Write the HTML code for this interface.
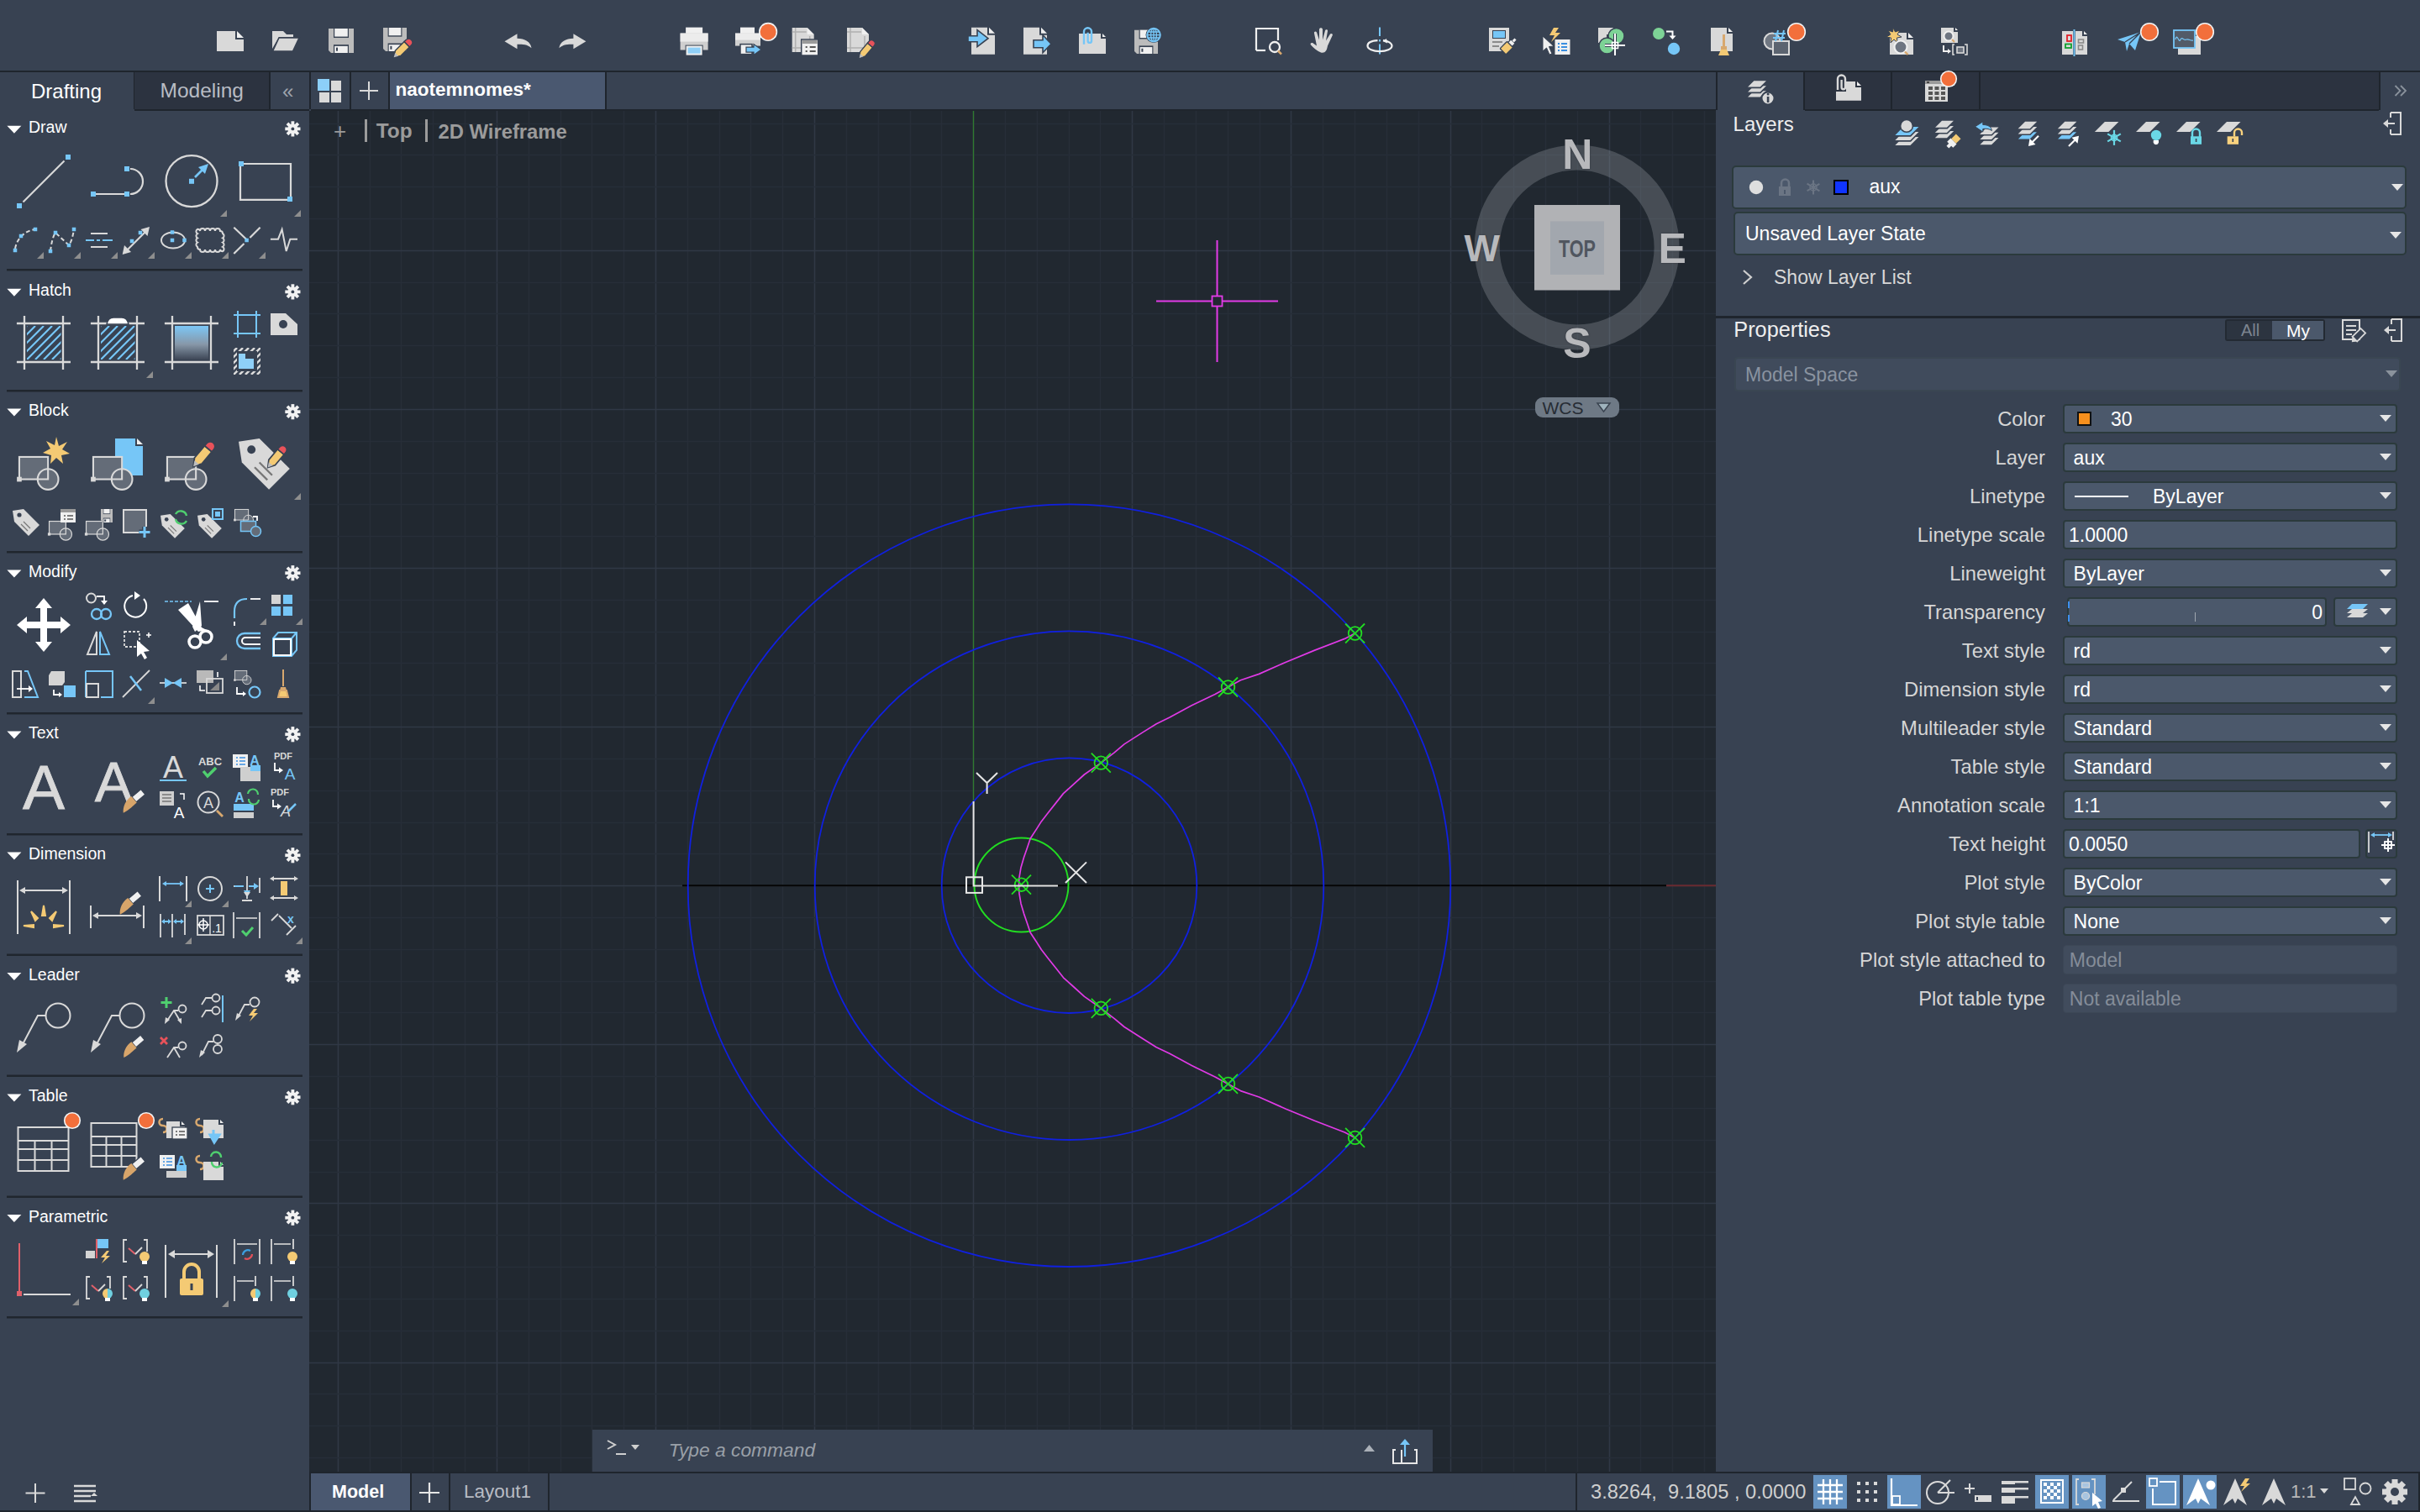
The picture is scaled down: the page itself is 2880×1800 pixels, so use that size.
<!DOCTYPE html><html><head><meta charset="utf-8"><style>
html,body{margin:0;padding:0;}
body{width:2880px;height:1800px;position:relative;overflow:hidden;background:#384252;font-family:"Liberation Sans", sans-serif;}
svg{overflow:visible}
</style></head><body>
<div style="position:absolute;left:0px;top:0px;width:2880px;height:84px;background:#384252;"></div><div style="position:absolute;left:0px;top:84px;width:2880px;height:2px;background:#1f252d;"></div><div style="position:absolute;left:0px;top:86px;width:368px;height:45px;background:#384252;"></div><div style="position:absolute;left:160px;top:86px;width:160px;height:44px;background:#2c3340;"></div><div style="position:absolute;left:370px;top:86px;width:1672px;height:44px;background:#384252;"></div><div style="position:absolute;left:320px;top:86px;width:2px;height:44px;background:#1f252d;"></div><div style="position:absolute;left:368px;top:86px;width:2px;height:44px;background:#1f252d;"></div><div style="position:absolute;left:416px;top:86px;width:2px;height:44px;background:#1f252d;"></div><div style="position:absolute;left:462px;top:86px;width:2px;height:44px;background:#1f252d;"></div><div style="position:absolute;left:159px;top:86px;width:1px;height:44px;background:#1f252d;"></div><div style="position:absolute;left:160px;top:130px;width:208px;height:2px;background:#1f252d;"></div><div style="position:absolute;left:370px;top:130px;width:1672px;height:2px;background:#1f252d;"></div><div style="position:absolute;left:464px;top:86px;width:256px;height:44px;background:#4a5870;"></div><div style="position:absolute;left:720px;top:86px;width:2px;height:44px;background:#1f252d;"></div><div style="position:absolute;left:368px;top:132px;width:1674px;height:1622px;background:#212830;"></div><div style="position:absolute;left:2042px;top:86px;width:838px;height:1668px;background:#384252;"></div><div style="position:absolute;left:0px;top:1754px;width:2880px;height:46px;background:#384252;"></div><div style="position:absolute;left:368px;top:1752px;width:2512px;height:2px;background:#1f252d;"></div><div style="position:absolute;left:0px;top:1798px;width:2880px;height:2px;background:#1f252d;"></div><svg style="position:absolute;left:368px;top:132px;" width="1674" height="1620" viewBox="0 0 1674 1620"><g transform="translate(-368,-132)"><line x1="402.5" y1="132" x2="402.5" y2="1752" stroke="#303845" stroke-width="1.6"/><line x1="440.5" y1="132" x2="440.5" y2="1752" stroke="#272e38" stroke-width="1.6"/><line x1="477.5" y1="132" x2="477.5" y2="1752" stroke="#272e38" stroke-width="1.6"/><line x1="515.5" y1="132" x2="515.5" y2="1752" stroke="#272e38" stroke-width="1.6"/><line x1="553.5" y1="132" x2="553.5" y2="1752" stroke="#272e38" stroke-width="1.6"/><line x1="591.5" y1="132" x2="591.5" y2="1752" stroke="#303845" stroke-width="1.6"/><line x1="629.5" y1="132" x2="629.5" y2="1752" stroke="#272e38" stroke-width="1.6"/><line x1="667.5" y1="132" x2="667.5" y2="1752" stroke="#272e38" stroke-width="1.6"/><line x1="704.5" y1="132" x2="704.5" y2="1752" stroke="#272e38" stroke-width="1.6"/><line x1="742.5" y1="132" x2="742.5" y2="1752" stroke="#272e38" stroke-width="1.6"/><line x1="780.5" y1="132" x2="780.5" y2="1752" stroke="#303845" stroke-width="1.6"/><line x1="818.5" y1="132" x2="818.5" y2="1752" stroke="#272e38" stroke-width="1.6"/><line x1="856.5" y1="132" x2="856.5" y2="1752" stroke="#272e38" stroke-width="1.6"/><line x1="893.5" y1="132" x2="893.5" y2="1752" stroke="#272e38" stroke-width="1.6"/><line x1="931.5" y1="132" x2="931.5" y2="1752" stroke="#272e38" stroke-width="1.6"/><line x1="969.5" y1="132" x2="969.5" y2="1752" stroke="#303845" stroke-width="1.6"/><line x1="1007.5" y1="132" x2="1007.5" y2="1752" stroke="#272e38" stroke-width="1.6"/><line x1="1045.5" y1="132" x2="1045.5" y2="1752" stroke="#272e38" stroke-width="1.6"/><line x1="1083.5" y1="132" x2="1083.5" y2="1752" stroke="#272e38" stroke-width="1.6"/><line x1="1120.5" y1="132" x2="1120.5" y2="1752" stroke="#272e38" stroke-width="1.6"/><line x1="1158.5" y1="132" x2="1158.5" y2="1752" stroke="#303845" stroke-width="1.6"/><line x1="1196.5" y1="132" x2="1196.5" y2="1752" stroke="#272e38" stroke-width="1.6"/><line x1="1234.5" y1="132" x2="1234.5" y2="1752" stroke="#272e38" stroke-width="1.6"/><line x1="1272.5" y1="132" x2="1272.5" y2="1752" stroke="#272e38" stroke-width="1.6"/><line x1="1309.5" y1="132" x2="1309.5" y2="1752" stroke="#272e38" stroke-width="1.6"/><line x1="1347.5" y1="132" x2="1347.5" y2="1752" stroke="#303845" stroke-width="1.6"/><line x1="1385.5" y1="132" x2="1385.5" y2="1752" stroke="#272e38" stroke-width="1.6"/><line x1="1423.5" y1="132" x2="1423.5" y2="1752" stroke="#272e38" stroke-width="1.6"/><line x1="1461.5" y1="132" x2="1461.5" y2="1752" stroke="#272e38" stroke-width="1.6"/><line x1="1499.5" y1="132" x2="1499.5" y2="1752" stroke="#272e38" stroke-width="1.6"/><line x1="1536.5" y1="132" x2="1536.5" y2="1752" stroke="#303845" stroke-width="1.6"/><line x1="1574.5" y1="132" x2="1574.5" y2="1752" stroke="#272e38" stroke-width="1.6"/><line x1="1612.5" y1="132" x2="1612.5" y2="1752" stroke="#272e38" stroke-width="1.6"/><line x1="1650.5" y1="132" x2="1650.5" y2="1752" stroke="#272e38" stroke-width="1.6"/><line x1="1688.5" y1="132" x2="1688.5" y2="1752" stroke="#272e38" stroke-width="1.6"/><line x1="1726.5" y1="132" x2="1726.5" y2="1752" stroke="#303845" stroke-width="1.6"/><line x1="1763.5" y1="132" x2="1763.5" y2="1752" stroke="#272e38" stroke-width="1.6"/><line x1="1801.5" y1="132" x2="1801.5" y2="1752" stroke="#272e38" stroke-width="1.6"/><line x1="1839.5" y1="132" x2="1839.5" y2="1752" stroke="#272e38" stroke-width="1.6"/><line x1="1877.5" y1="132" x2="1877.5" y2="1752" stroke="#272e38" stroke-width="1.6"/><line x1="1915.5" y1="132" x2="1915.5" y2="1752" stroke="#303845" stroke-width="1.6"/><line x1="1952.5" y1="132" x2="1952.5" y2="1752" stroke="#272e38" stroke-width="1.6"/><line x1="1990.5" y1="132" x2="1990.5" y2="1752" stroke="#272e38" stroke-width="1.6"/><line x1="2028.5" y1="132" x2="2028.5" y2="1752" stroke="#272e38" stroke-width="1.6"/><line x1="368" y1="147.5" x2="2042" y2="147.5" stroke="#272e38" stroke-width="1.6"/><line x1="368" y1="184.5" x2="2042" y2="184.5" stroke="#272e38" stroke-width="1.6"/><line x1="368" y1="222.5" x2="2042" y2="222.5" stroke="#272e38" stroke-width="1.6"/><line x1="368" y1="260.5" x2="2042" y2="260.5" stroke="#272e38" stroke-width="1.6"/><line x1="368" y1="298.5" x2="2042" y2="298.5" stroke="#303845" stroke-width="1.6"/><line x1="368" y1="336.5" x2="2042" y2="336.5" stroke="#272e38" stroke-width="1.6"/><line x1="368" y1="373.5" x2="2042" y2="373.5" stroke="#272e38" stroke-width="1.6"/><line x1="368" y1="411.5" x2="2042" y2="411.5" stroke="#272e38" stroke-width="1.6"/><line x1="368" y1="449.5" x2="2042" y2="449.5" stroke="#272e38" stroke-width="1.6"/><line x1="368" y1="487.5" x2="2042" y2="487.5" stroke="#303845" stroke-width="1.6"/><line x1="368" y1="525.5" x2="2042" y2="525.5" stroke="#272e38" stroke-width="1.6"/><line x1="368" y1="563.5" x2="2042" y2="563.5" stroke="#272e38" stroke-width="1.6"/><line x1="368" y1="600.5" x2="2042" y2="600.5" stroke="#272e38" stroke-width="1.6"/><line x1="368" y1="638.5" x2="2042" y2="638.5" stroke="#272e38" stroke-width="1.6"/><line x1="368" y1="676.5" x2="2042" y2="676.5" stroke="#303845" stroke-width="1.6"/><line x1="368" y1="714.5" x2="2042" y2="714.5" stroke="#272e38" stroke-width="1.6"/><line x1="368" y1="752.5" x2="2042" y2="752.5" stroke="#272e38" stroke-width="1.6"/><line x1="368" y1="789.5" x2="2042" y2="789.5" stroke="#272e38" stroke-width="1.6"/><line x1="368" y1="827.5" x2="2042" y2="827.5" stroke="#272e38" stroke-width="1.6"/><line x1="368" y1="865.5" x2="2042" y2="865.5" stroke="#303845" stroke-width="1.6"/><line x1="368" y1="903.5" x2="2042" y2="903.5" stroke="#272e38" stroke-width="1.6"/><line x1="368" y1="941.5" x2="2042" y2="941.5" stroke="#272e38" stroke-width="1.6"/><line x1="368" y1="979.5" x2="2042" y2="979.5" stroke="#272e38" stroke-width="1.6"/><line x1="368" y1="1016.5" x2="2042" y2="1016.5" stroke="#272e38" stroke-width="1.6"/><line x1="368" y1="1054.5" x2="2042" y2="1054.5" stroke="#303845" stroke-width="1.6"/><line x1="368" y1="1092.5" x2="2042" y2="1092.5" stroke="#272e38" stroke-width="1.6"/><line x1="368" y1="1130.5" x2="2042" y2="1130.5" stroke="#272e38" stroke-width="1.6"/><line x1="368" y1="1168.5" x2="2042" y2="1168.5" stroke="#272e38" stroke-width="1.6"/><line x1="368" y1="1205.5" x2="2042" y2="1205.5" stroke="#272e38" stroke-width="1.6"/><line x1="368" y1="1243.5" x2="2042" y2="1243.5" stroke="#303845" stroke-width="1.6"/><line x1="368" y1="1281.5" x2="2042" y2="1281.5" stroke="#272e38" stroke-width="1.6"/><line x1="368" y1="1319.5" x2="2042" y2="1319.5" stroke="#272e38" stroke-width="1.6"/><line x1="368" y1="1357.5" x2="2042" y2="1357.5" stroke="#272e38" stroke-width="1.6"/><line x1="368" y1="1395.5" x2="2042" y2="1395.5" stroke="#272e38" stroke-width="1.6"/><line x1="368" y1="1432.5" x2="2042" y2="1432.5" stroke="#303845" stroke-width="1.6"/><line x1="368" y1="1470.5" x2="2042" y2="1470.5" stroke="#272e38" stroke-width="1.6"/><line x1="368" y1="1508.5" x2="2042" y2="1508.5" stroke="#272e38" stroke-width="1.6"/><line x1="368" y1="1546.5" x2="2042" y2="1546.5" stroke="#272e38" stroke-width="1.6"/><line x1="368" y1="1584.5" x2="2042" y2="1584.5" stroke="#272e38" stroke-width="1.6"/><line x1="368" y1="1622.5" x2="2042" y2="1622.5" stroke="#303845" stroke-width="1.6"/><line x1="368" y1="1659.5" x2="2042" y2="1659.5" stroke="#272e38" stroke-width="1.6"/><line x1="368" y1="1697.5" x2="2042" y2="1697.5" stroke="#272e38" stroke-width="1.6"/><line x1="368" y1="1735.5" x2="2042" y2="1735.5" stroke="#272e38" stroke-width="1.6"/><line x1="812" y1="1054.2" x2="1983" y2="1054.2" stroke="#050505" stroke-width="2"/><line x1="1983" y1="1054.2" x2="2042" y2="1054.2" stroke="#6a2a30" stroke-width="2"/><line x1="1158.5" y1="132" x2="1158.5" y2="954" stroke="#2f7a2f" stroke-width="1.3"/><circle cx="1272.5" cy="1054.2" r="151.8" fill="none" stroke="#1020e0" stroke-width="1.8"/><circle cx="1272.5" cy="1054.2" r="302.8" fill="none" stroke="#1020e0" stroke-width="1.8"/><circle cx="1272.5" cy="1054.2" r="453.8" fill="none" stroke="#1020e0" stroke-width="1.8"/><circle cx="1215.5" cy="1053.5" r="56" fill="none" stroke="#22dd22" stroke-width="2"/><path d="M1612.6,754.0 L1600.3,760.4 L1564.6,774.1 L1530.4,788.2 L1498.4,802.4 L1476.4,809.8 L1461.5,818.0 L1446.0,826.4 L1418.3,839.8 L1392.0,854.1 L1376.2,861.7 L1360.3,871.6 L1338.0,885.9 L1326.2,895.8 L1310.3,908.1 L1290.5,922.0 L1277.4,933.9 L1265.5,944.6 L1257.0,955.4 L1247.6,967.2 L1239.3,977.9 L1233.3,987.4 L1226.2,998.2 L1222.6,1008.9 L1218.5,1020.8 L1215.0,1032.7 L1213.0,1044.6 L1212.5,1054.2 L1213.0,1063.8 L1215.0,1075.7 L1218.5,1087.6 L1222.6,1099.5 L1226.2,1110.2 L1233.3,1121.0 L1239.3,1130.5 L1247.6,1141.2 L1257.0,1153.0 L1265.5,1163.8 L1277.4,1174.5 L1290.5,1186.4 L1310.3,1200.3 L1326.2,1212.6 L1338.0,1222.5 L1360.3,1236.8 L1376.2,1246.7 L1392.0,1254.3 L1418.3,1268.6 L1446.0,1282.0 L1461.5,1290.4 L1476.4,1298.6 L1498.4,1306.0 L1530.4,1320.2 L1564.6,1334.3 L1600.3,1348.0 L1612.6,1354.4" fill="none" stroke="#e03ae6" stroke-width="1.7" stroke-linejoin="round"/><circle cx="1215.5" cy="1053.2" r="7.8" fill="none" stroke="#22dd22" stroke-width="1.8"/><path d="M1204.0,1041.7L1227.0,1064.7M1204.0,1064.7L1227.0,1041.7" stroke="#22dd22" stroke-width="1.8"/><circle cx="1310.3" cy="908.1" r="7.8" fill="none" stroke="#22dd22" stroke-width="1.8"/><path d="M1298.8,896.6L1321.8,919.6M1298.8,919.6L1321.8,896.6" stroke="#22dd22" stroke-width="1.8"/><circle cx="1461.5" cy="818" r="7.8" fill="none" stroke="#22dd22" stroke-width="1.8"/><path d="M1450.0,806.5L1473.0,829.5M1450.0,829.5L1473.0,806.5" stroke="#22dd22" stroke-width="1.8"/><circle cx="1612.6" cy="754" r="7.8" fill="none" stroke="#22dd22" stroke-width="1.8"/><path d="M1601.1,742.5L1624.1,765.5M1601.1,765.5L1624.1,742.5" stroke="#22dd22" stroke-width="1.8"/><circle cx="1310.3" cy="1200.3" r="7.8" fill="none" stroke="#22dd22" stroke-width="1.8"/><path d="M1298.8,1188.8L1321.8,1211.8M1298.8,1211.8L1321.8,1188.8" stroke="#22dd22" stroke-width="1.8"/><circle cx="1461.5" cy="1290.4" r="7.8" fill="none" stroke="#22dd22" stroke-width="1.8"/><path d="M1450.0,1278.9L1473.0,1301.9M1450.0,1301.9L1473.0,1278.9" stroke="#22dd22" stroke-width="1.8"/><circle cx="1612.6" cy="1354.4" r="7.8" fill="none" stroke="#22dd22" stroke-width="1.8"/><path d="M1601.1,1342.9L1624.1,1365.9M1601.1,1365.9L1624.1,1342.9" stroke="#22dd22" stroke-width="1.8"/><path d="M1158.6,954 L1158.6,1054.5 L1259,1054.5" fill="none" stroke="#e6e6e6" stroke-width="2"/><rect x="1150" y="1044.3" width="19" height="18.6" fill="none" stroke="#e6e6e6" stroke-width="2"/><path d="M1162,920 L1174.6,932 L1187,920 M1174.6,932 L1174.6,945" fill="none" stroke="#e6e6e6" stroke-width="2"/><path d="M1268,1026.4 L1293,1051 M1268,1051 L1293,1026.4" fill="none" stroke="#e6e6e6" stroke-width="2"/><path d="M1376,358.5 L1442,358.5 M1455,358.5 L1521,358.5 M1448.5,286 L1448.5,352 M1448.5,365 L1448.5,431" stroke="#e33be8" stroke-width="2"/><rect x="1442.5" y="352.5" width="12" height="12" fill="none" stroke="#e33be8" stroke-width="1.8"/><circle cx="1876.6" cy="294.5" r="107" fill="none" stroke="#a0a5ad" stroke-opacity="0.3" stroke-width="30"/><rect x="1826" y="244" width="102" height="101.5" fill="#b1b2b5"/><rect x="1845" y="263.4" width="64" height="63.5" fill="#a2a7ae"/></g></svg><div style="position:absolute;left:1377.3px;width:1000px;text-align:center;top:280.6px;font-size:30px;line-height:30px;color:#50565f;font-weight:bold;white-space:nowrap;transform:scaleX(0.72);">TOP</div><div style="position:absolute;left:1377.4px;width:1000px;text-align:center;top:159.2px;font-size:50px;line-height:50px;color:#b8b9bc;font-weight:bold;white-space:nowrap;text-shadow:0 0 2px #2a2f38;">N</div><div style="position:absolute;left:1263.8px;width:1000px;text-align:center;top:272.9px;font-size:45px;line-height:45px;color:#b8b9bc;font-weight:bold;white-space:nowrap;text-shadow:0 0 2px #2a2f38;">W</div><div style="position:absolute;left:1490.2px;width:1000px;text-align:center;top:270.7px;font-size:50px;line-height:50px;color:#b8b9bc;font-weight:bold;white-space:nowrap;text-shadow:0 0 2px #2a2f38;">E</div><div style="position:absolute;left:1377px;width:1000px;text-align:center;top:384.4px;font-size:50px;line-height:50px;color:#b8b9bc;font-weight:bold;white-space:nowrap;text-shadow:0 0 2px #2a2f38;">S</div><div style="position:absolute;left:1827px;top:473px;width:100px;height:24px;background:#6e7985;border-radius:9px;"></div><div style="position:absolute;left:1360px;width:1000px;text-align:center;top:474.7px;font-size:21px;line-height:21px;color:#262c34;font-weight:normal;white-space:nowrap;">WCS</div><svg style="position:absolute;left:1900px;top:479px;" width="17" height="12" viewBox="0 0 17 12"><path d="M1,1 L16,1 L8.5,11 Z" fill="#9fb3bd" stroke="#3a4450" stroke-width="1.5"/></svg><div style="position:absolute;left:397px;top:143.0px;font-size:26px;line-height:26px;color:#9b9b9b;font-weight:normal;white-space:nowrap;">+</div><div style="position:absolute;left:434px;top:142px;width:3px;height:27px;background:#9b9b9b;"></div><div style="position:absolute;left:447.7px;top:144.3px;font-size:24.4px;line-height:24.4px;color:#9b9b9b;font-weight:bold;white-space:nowrap;">Top</div><div style="position:absolute;left:506px;top:142px;width:3px;height:27px;background:#9b9b9b;"></div><div style="position:absolute;left:521.5px;top:144.9px;font-size:23.8px;line-height:23.8px;color:#9b9b9b;font-weight:bold;white-space:nowrap;">2D Wireframe</div><div style="position:absolute;left:34px;top:142.2px;font-size:19.5px;line-height:19.5px;color:#ffffff;font-weight:normal;white-space:nowrap;">Draw</div><div style="position:absolute;left:34px;top:336.2px;font-size:19.5px;line-height:19.5px;color:#ffffff;font-weight:normal;white-space:nowrap;">Hatch</div><div style="position:absolute;left:34px;top:479.0px;font-size:19.5px;line-height:19.5px;color:#ffffff;font-weight:normal;white-space:nowrap;">Block</div><div style="position:absolute;left:34px;top:671.0px;font-size:19.5px;line-height:19.5px;color:#ffffff;font-weight:normal;white-space:nowrap;">Modify</div><div style="position:absolute;left:34px;top:863.0px;font-size:19.5px;line-height:19.5px;color:#ffffff;font-weight:normal;white-space:nowrap;">Text</div><div style="position:absolute;left:34px;top:1007.0px;font-size:19.5px;line-height:19.5px;color:#ffffff;font-weight:normal;white-space:nowrap;">Dimension</div><div style="position:absolute;left:34px;top:1150.5px;font-size:19.5px;line-height:19.5px;color:#ffffff;font-weight:normal;white-space:nowrap;">Leader</div><div style="position:absolute;left:34px;top:1295.0px;font-size:19.5px;line-height:19.5px;color:#ffffff;font-weight:normal;white-space:nowrap;">Table</div><div style="position:absolute;left:34px;top:1438.5px;font-size:19.5px;line-height:19.5px;color:#ffffff;font-weight:normal;white-space:nowrap;">Parametric</div><div style="position:absolute;left:37px;top:96.7px;font-size:24px;line-height:24px;color:#ffffff;font-weight:normal;white-space:nowrap;">Drafting</div><div style="position:absolute;left:190.5px;top:96.3px;font-size:24.5px;line-height:24.5px;color:#b8bcc4;font-weight:normal;white-space:nowrap;">Modeling</div><div style="position:absolute;left:336px;top:96.7px;font-size:24px;line-height:24px;color:#9ea4ad;font-weight:normal;white-space:nowrap;">&laquo;</div><svg style="position:absolute;left:375px;top:91px;" width="34" height="34" viewBox="0 0 34 34"><rect x="3" y="3" width="14" height="14" fill="#8ccff8"/><rect x="19" y="5" width="12" height="12" fill="#d9d9d9"/><rect x="5" y="19" width="12" height="12" fill="#d9d9d9"/><rect x="19" y="19" width="12" height="12" fill="#d9d9d9"/></svg><svg style="position:absolute;left:428px;top:96px;" width="24" height="24" viewBox="0 0 24 24"><path d="M11,1V23M0,12H22" stroke="#d9d9d9" stroke-width="2"/></svg><div style="position:absolute;left:470.5px;top:96.2px;font-size:22.5px;line-height:22.5px;color:#ffffff;font-weight:bold;white-space:nowrap;">naotemnomes*</div><div style="position:absolute;left:2042px;top:86px;width:2px;height:45px;background:#1f252d;"></div><div style="position:absolute;left:2146px;top:86px;width:2px;height:45px;background:#1f252d;"></div><div style="position:absolute;left:2148px;top:86px;width:102px;height:45px;background:#2c3340;"></div><div style="position:absolute;left:2250px;top:86px;width:2px;height:45px;background:#1f252d;"></div><div style="position:absolute;left:2252px;top:86px;width:103px;height:45px;background:#2c3340;"></div><div style="position:absolute;left:2355px;top:86px;width:2px;height:45px;background:#1f252d;"></div><div style="position:absolute;left:2357px;top:86px;width:474px;height:45px;background:#2c3340;"></div><div style="position:absolute;left:2831px;top:86px;width:2px;height:45px;background:#1f252d;"></div><div style="position:absolute;left:2148px;top:130px;width:683px;height:2px;background:#1f252d;"></div><div style="position:absolute;left:2062.6px;top:135.7px;font-size:24px;line-height:24px;color:#eeeeee;font-weight:normal;white-space:nowrap;">Layers</div><div style="position:absolute;left:2061px;top:196.5px;width:2803px;height:0px;background:transparent;"></div><div style="position:absolute;left:2061px;top:196.5px;width:803px;height:52px;background:#4b586b;border:2px solid #2b3a3c;border-radius:5px;box-sizing:border-box;"></div><div style="position:absolute;left:2224.5px;top:211.3px;font-size:23px;line-height:23px;color:#ffffff;font-weight:normal;white-space:nowrap;transform:scaleY(1.08);transform-origin:0 90%;">aux</div><div style="position:absolute;left:2062.5px;top:252px;width:801.5px;height:52px;background:#4b586b;border:2px solid #2b3a3c;border-radius:5px;box-sizing:border-box;"></div><div style="position:absolute;left:2077px;top:267.0px;font-size:23px;line-height:23px;color:#ffffff;font-weight:normal;white-space:nowrap;">Unsaved Layer State</div><div style="position:absolute;left:2111px;top:318.5px;font-size:23px;line-height:23px;color:#d8d8d8;font-weight:normal;white-space:nowrap;">Show Layer List</div><div style="position:absolute;left:2042px;top:376px;width:838px;height:2.5px;background:#1f252d;"></div><div style="position:absolute;left:2063.3px;top:380.4px;font-size:25.3px;line-height:25.3px;color:#eeeeee;font-weight:normal;white-space:nowrap;">Properties</div><div style="position:absolute;left:2648px;top:380px;width:119px;height:26px;background:#2c3440;border:2px solid #232a33;border-radius:3px;box-sizing:border-box;"></div><div style="position:absolute;left:2704px;top:382px;width:61px;height:22px;background:#4b586b;"></div><div style="position:absolute;left:2178px;width:1000px;text-align:center;top:383.1px;font-size:20px;line-height:20px;color:#7d8590;font-weight:normal;white-space:nowrap;">All</div><div style="position:absolute;left:2235px;width:1000px;text-align:center;top:383.2px;font-size:21px;line-height:21px;color:#ffffff;font-weight:normal;white-space:nowrap;">My</div><div style="position:absolute;left:2064px;top:425px;width:793px;height:41px;background:#404b5c;border:2px solid #3a4652;border-radius:4px;box-sizing:border-box;"></div><div style="position:absolute;left:2077px;top:434.5px;font-size:23px;line-height:23px;color:#8a93a0;font-weight:normal;white-space:nowrap;">Model Space</div><div style="position:absolute;right:446px;top:486.9px;font-size:23.8px;line-height:23.8px;color:#d6d6d6;font-weight:normal;white-space:nowrap;">Color</div><div style="position:absolute;left:2455px;top:481.0px;width:398px;height:35px;background:#4b586b;border:2px solid #2b3a3c;border-radius:4px;box-sizing:border-box;"></div><div style="position:absolute;left:2472px;top:490.0px;width:17px;height:17px;background:#f7901e;border:2px solid #111;box-sizing:border-box;"></div><div style="position:absolute;left:2512px;top:487.5px;font-size:23px;line-height:23px;color:#ffffff;font-weight:normal;white-space:nowrap;">30</div><div style="position:absolute;right:446px;top:532.9px;font-size:23.8px;line-height:23.8px;color:#d6d6d6;font-weight:normal;white-space:nowrap;">Layer</div><div style="position:absolute;left:2455px;top:527.0px;width:398px;height:35px;background:#4b586b;border:2px solid #2b3a3c;border-radius:4px;box-sizing:border-box;"></div><div style="position:absolute;left:2467.6px;top:533.5px;font-size:23px;line-height:23px;color:#ffffff;font-weight:normal;white-space:nowrap;">aux</div><div style="position:absolute;right:446px;top:578.9px;font-size:23.8px;line-height:23.8px;color:#d6d6d6;font-weight:normal;white-space:nowrap;">Linetype</div><div style="position:absolute;left:2455px;top:573.0px;width:398px;height:35px;background:#4b586b;border:2px solid #2b3a3c;border-radius:4px;box-sizing:border-box;"></div><div style="position:absolute;left:2469px;top:590.0px;width:64px;height:2px;background:#ffffff;"></div><div style="position:absolute;left:2562px;top:579.5px;font-size:23px;line-height:23px;color:#ffffff;font-weight:normal;white-space:nowrap;">ByLayer</div><div style="position:absolute;right:446px;top:624.9px;font-size:23.8px;line-height:23.8px;color:#d6d6d6;font-weight:normal;white-space:nowrap;">Linetype scale</div><div style="position:absolute;left:2455px;top:619.0px;width:398px;height:35px;background:#4b586b;border:2px solid #2b3a3c;border-radius:4px;box-sizing:border-box;"></div><div style="position:absolute;left:2462px;top:625.5px;font-size:23px;line-height:23px;color:#ffffff;font-weight:normal;white-space:nowrap;">1.0000</div><div style="position:absolute;right:446px;top:670.9px;font-size:23.8px;line-height:23.8px;color:#d6d6d6;font-weight:normal;white-space:nowrap;">Lineweight</div><div style="position:absolute;left:2455px;top:665.0px;width:398px;height:35px;background:#4b586b;border:2px solid #2b3a3c;border-radius:4px;box-sizing:border-box;"></div><div style="position:absolute;left:2467.6px;top:671.5px;font-size:23px;line-height:23px;color:#ffffff;font-weight:normal;white-space:nowrap;">ByLayer</div><div style="position:absolute;right:446px;top:716.9px;font-size:23.8px;line-height:23.8px;color:#d6d6d6;font-weight:normal;white-space:nowrap;">Transparency</div><div style="position:absolute;left:2460px;top:711.0px;width:309px;height:35px;background:#4b586b;border:2px solid #2b3a3c;border-radius:4px;box-sizing:border-box;"></div><div style="position:absolute;right:116px;top:717.5px;font-size:23px;line-height:23px;color:#ffffff;font-weight:normal;white-space:nowrap;">0</div><div style="position:absolute;left:2776.6px;top:711.0px;width:76.40000000000009px;height:35px;background:#4b586b;border:2px solid #2b3a3c;border-radius:4px;box-sizing:border-box;"></div><div style="position:absolute;right:446px;top:762.9px;font-size:23.8px;line-height:23.8px;color:#d6d6d6;font-weight:normal;white-space:nowrap;">Text style</div><div style="position:absolute;left:2455px;top:757.0px;width:398px;height:35px;background:#4b586b;border:2px solid #2b3a3c;border-radius:4px;box-sizing:border-box;"></div><div style="position:absolute;left:2467.6px;top:763.5px;font-size:23px;line-height:23px;color:#ffffff;font-weight:normal;white-space:nowrap;">rd</div><div style="position:absolute;right:446px;top:808.9px;font-size:23.8px;line-height:23.8px;color:#d6d6d6;font-weight:normal;white-space:nowrap;">Dimension style</div><div style="position:absolute;left:2455px;top:803.0px;width:398px;height:35px;background:#4b586b;border:2px solid #2b3a3c;border-radius:4px;box-sizing:border-box;"></div><div style="position:absolute;left:2467.6px;top:809.5px;font-size:23px;line-height:23px;color:#ffffff;font-weight:normal;white-space:nowrap;">rd</div><div style="position:absolute;right:446px;top:854.9px;font-size:23.8px;line-height:23.8px;color:#d6d6d6;font-weight:normal;white-space:nowrap;">Multileader style</div><div style="position:absolute;left:2455px;top:849.0px;width:398px;height:35px;background:#4b586b;border:2px solid #2b3a3c;border-radius:4px;box-sizing:border-box;"></div><div style="position:absolute;left:2467.6px;top:855.5px;font-size:23px;line-height:23px;color:#ffffff;font-weight:normal;white-space:nowrap;">Standard</div><div style="position:absolute;right:446px;top:900.9px;font-size:23.8px;line-height:23.8px;color:#d6d6d6;font-weight:normal;white-space:nowrap;">Table style</div><div style="position:absolute;left:2455px;top:895.0px;width:398px;height:35px;background:#4b586b;border:2px solid #2b3a3c;border-radius:4px;box-sizing:border-box;"></div><div style="position:absolute;left:2467.6px;top:901.5px;font-size:23px;line-height:23px;color:#ffffff;font-weight:normal;white-space:nowrap;">Standard</div><div style="position:absolute;right:446px;top:946.9px;font-size:23.8px;line-height:23.8px;color:#d6d6d6;font-weight:normal;white-space:nowrap;">Annotation scale</div><div style="position:absolute;left:2455px;top:941.0px;width:398px;height:35px;background:#4b586b;border:2px solid #2b3a3c;border-radius:4px;box-sizing:border-box;"></div><div style="position:absolute;left:2467.6px;top:947.5px;font-size:23px;line-height:23px;color:#ffffff;font-weight:normal;white-space:nowrap;">1:1</div><div style="position:absolute;right:446px;top:992.9px;font-size:23.8px;line-height:23.8px;color:#d6d6d6;font-weight:normal;white-space:nowrap;">Text height</div><div style="position:absolute;left:2455px;top:987.0px;width:354px;height:35px;background:#4b586b;border:2px solid #2b3a3c;border-radius:4px;box-sizing:border-box;"></div><div style="position:absolute;left:2815px;top:987.0px;width:38px;height:35px;background:#394354;border:2px solid #2b3a3c;border-radius:4px;box-sizing:border-box;"></div><div style="position:absolute;left:2462px;top:993.5px;font-size:23px;line-height:23px;color:#ffffff;font-weight:normal;white-space:nowrap;">0.0050</div><div style="position:absolute;right:446px;top:1038.9px;font-size:23.8px;line-height:23.8px;color:#d6d6d6;font-weight:normal;white-space:nowrap;">Plot style</div><div style="position:absolute;left:2455px;top:1033.0px;width:398px;height:35px;background:#4b586b;border:2px solid #2b3a3c;border-radius:4px;box-sizing:border-box;"></div><div style="position:absolute;left:2467.6px;top:1039.5px;font-size:23px;line-height:23px;color:#ffffff;font-weight:normal;white-space:nowrap;">ByColor</div><div style="position:absolute;right:446px;top:1084.9px;font-size:23.8px;line-height:23.8px;color:#d6d6d6;font-weight:normal;white-space:nowrap;">Plot style table</div><div style="position:absolute;left:2455px;top:1079.0px;width:398px;height:35px;background:#4b586b;border:2px solid #2b3a3c;border-radius:4px;box-sizing:border-box;"></div><div style="position:absolute;left:2467.6px;top:1085.5px;font-size:23px;line-height:23px;color:#ffffff;font-weight:normal;white-space:nowrap;">None</div><div style="position:absolute;right:446px;top:1130.9px;font-size:23.8px;line-height:23.8px;color:#d6d6d6;font-weight:normal;white-space:nowrap;">Plot style attached to</div><div style="position:absolute;left:2455px;top:1125.0px;width:398px;height:35px;background:#414c5d;border:1.5px solid #3c4756;border-radius:4px;box-sizing:border-box;"></div><div style="position:absolute;left:2462.8px;top:1131.5px;font-size:23px;line-height:23px;color:#858d99;font-weight:normal;white-space:nowrap;">Model</div><div style="position:absolute;right:446px;top:1176.9px;font-size:23.8px;line-height:23.8px;color:#d6d6d6;font-weight:normal;white-space:nowrap;">Plot table type</div><div style="position:absolute;left:2455px;top:1171.0px;width:398px;height:35px;background:#414c5d;border:1.5px solid #3c4756;border-radius:4px;box-sizing:border-box;"></div><div style="position:absolute;left:2462.8px;top:1177.5px;font-size:23px;line-height:23px;color:#858d99;font-weight:normal;white-space:nowrap;">Not available</div><div style="position:absolute;left:370px;top:1754px;width:118px;height:44px;background:#4a5870;"></div><div style="position:absolute;left:488px;top:1754px;width:2px;height:44px;background:#1f252d;"></div><div style="position:absolute;left:534px;top:1754px;width:2px;height:44px;background:#1f252d;"></div><div style="position:absolute;left:652px;top:1754px;width:2px;height:44px;background:#1f252d;"></div><div style="position:absolute;left:368px;top:1754px;width:2px;height:44px;background:#1f252d;"></div><svg style="position:absolute;left:496px;top:1762px;" width="30" height="30" viewBox="0 0 30 30"><path d="M15,3V27M3,15H27" stroke="#e6e6e6" stroke-width="2.2"/></svg><div style="position:absolute;left:395px;top:1765.8px;font-size:21.5px;line-height:21.5px;color:#ffffff;font-weight:bold;white-space:nowrap;">Model</div><div style="position:absolute;left:552px;top:1765.0px;font-size:22.5px;line-height:22.5px;color:#b8bcc4;font-weight:normal;white-space:nowrap;">Layout1</div><div style="position:absolute;left:705px;top:1702px;width:1000px;height:50px;background:#384252;"></div><svg style="position:absolute;left:720px;top:1710px;" width="50" height="30" viewBox="0 0 50 30"><path d="M3,5 L12,10 L3,15" fill="none" stroke="#cfcfcf" stroke-width="2"/><path d="M13,21H25" stroke="#cfcfcf" stroke-width="2"/><path d="M31,10H41L36,16Z" fill="#cfcfcf"/></svg><div style="position:absolute;left:795.7px;top:1714.7px;font-size:22.8px;line-height:22.8px;color:#9aa0a8;font-weight:normal;white-space:nowrap;font-style:italic;">Type a command</div><svg style="position:absolute;left:1622px;top:1718px;" width="16" height="12" viewBox="0 0 16 12"><path d="M1,10 L7.5,2 L14,10Z" fill="#aab0b8"/></svg><svg style="position:absolute;left:1656px;top:1712px;" width="34" height="32" viewBox="0 0 34 32"><path d="M5,14 H2 V30 H30 V14 H27" fill="none" stroke="#e6e6e6" stroke-width="2"/><path d="M16,2V22" stroke="#76c6f7" stroke-width="2.2"/><path d="M10,8 L16,1 L22,8Z" fill="#76c6f7"/><path d="M12,14V30" stroke="#e6e6e6" stroke-width="2"/></svg><div style="position:absolute;left:1875px;top:1754px;width:2px;height:44px;background:#1f252d;"></div><div style="position:absolute;left:1893px;top:1765.0px;font-size:23.65px;line-height:23.65px;color:#cfcfcf;font-weight:normal;white-space:nowrap;">3.8264,&nbsp; 9.1805 , 0.0000</div><div style="position:absolute;left:2726px;top:1765.4px;font-size:22px;line-height:22px;color:#b8b8b8;font-weight:normal;white-space:nowrap;">1:1</div><div style="position:absolute;left:2878px;top:1754px;width:2px;height:44px;background:#1f252d;"></div><!--CONTENT--><svg style="position:absolute;left:0;top:0" width="2880" height="1800"><g transform="translate(258,37)"><path d="M0,0H22V10H32V24H0Z" fill="#d9d9d9"/><path d="M24,0L32,8H24Z" fill="#f0f0f0"/></g><g transform="translate(324,37)"><path d="M0,0H13L17,4H25V7H8L0,21Z" fill="#d9d9d9"/><path d="M8,8H32L24.5,24H0.5Z" fill="#d9d9d9" stroke="#384252" stroke-width="1.6"/></g><g transform="translate(391,34)"><path d="M0,0H30V29H3L0,26Z" fill="#bcbcbc"/><rect x="6.0" y="0" width="18.0" height="11.02" fill="#384252"/><rect x="7.199999999999999" y="0" width="15.600000000000001" height="9.57" fill="#f0f0f0"/><rect x="6.0" y="19.14" width="18.0" height="9.860000000000001" fill="#384252"/><rect x="7.199999999999999" y="20.88" width="15.600000000000001" height="8.120000000000001" fill="#f0f0f0"/><rect x="9.0" y="22.62" width="2" height="4.0600000000000005" fill="#384252"/></g><g transform="translate(456,33)"><path d="M0,0H28V28H3L0,25Z" fill="#bcbcbc"/><rect x="5.6000000000000005" y="0" width="16.8" height="10.64" fill="#384252"/><rect x="6.72" y="0" width="14.56" height="9.24" fill="#f0f0f0"/><rect x="5.6000000000000005" y="18.48" width="16.8" height="9.520000000000001" fill="#384252"/><rect x="6.72" y="20.16" width="14.56" height="7.840000000000001" fill="#f0f0f0"/><rect x="8.4" y="21.84" width="2" height="3.9200000000000004" fill="#384252"/><g transform="translate(24,24) rotate(-45) scale(1.0)"><path d="M-9,-4.5 H6 V4.5 H-9 L-16,0 Z" fill="#f4ca74" stroke="#384252" stroke-width="1.5"/><path d="M-16,0 L-11,-2.8 V2.8Z" fill="#bdbdbd"/><path d="M6,-4.5 H9 A4.5,4.5 0 0 1 9,4.5 H6Z" fill="#e8525a" stroke="#384252" stroke-width="1.5"/></g></g><g transform="translate(600.5,40.2)"><path d="M0,9 L15,0 V5.5 C24,5.5 31,9.5 32,17 C27,12.5 22,12.5 15,12.5 V18 Z" fill="#d9d9d9"/></g><g transform="translate(697.4,40.2)"><g transform="scale(-1,1)"><path d="M0,9 L15,0 V5.5 C24,5.5 31,9.5 32,17 C27,12.5 22,12.5 15,12.5 V18 Z" fill="#d9d9d9"/></g></g><g transform="translate(809.6,32.6)"><g transform="scale(1.0)"><rect x="6.5" y="0" width="20" height="8" fill="#f0f0f0"/><path d="M0,7H33V27H0Z" fill="#cfcfcf"/><rect x="0" y="7" width="33" height="10" fill="#ececec"/><rect x="6" y="21" width="21" height="12" fill="#384252"/><rect x="7" y="22" width="19" height="11" fill="#f0f0f0"/><rect x="9" y="24" width="15" height="7" fill="#8fcff7"/></g></g><g transform="translate(875,32.6)"><rect x="6" y="0" width="17" height="8" fill="#f0f0f0"/><path d="M0,7H30V22H0Z" fill="#d0d0d0"/><rect x="0" y="7" width="30" height="8" fill="#ececec"/><rect x="6" y="20" width="14" height="12" fill="#f0f0f0" stroke="#384252" stroke-width="1.5"/><path d="M13,23.5H22V20L31,26.5L22,33V29.5H13Z" fill="#76c6f7" stroke="#384252" stroke-width="1.2"/></g><circle cx="914.1" cy="37.9" r="11.1" fill="#f3f3f3"/><circle cx="914.1" cy="37.9" r="9.5" fill="#f26f3b"/><g transform="translate(942.7,33)"><path d="M0,0H18L26,8V29H0Z" fill="#d9d9d9"/><path d="M18,0V8H26" fill="#f0f0f0"/><path d="M4,0V29M21,10V29M0,5H17M0,24H26" stroke="#b0b0b0" stroke-width="1.5"/><rect x="11" y="14" width="20" height="19" fill="#f0f0f0" stroke="#384252" stroke-width="1.5"/><rect x="12" y="15" width="18" height="4" fill="#9a9a9a"/><path d="M16,23H18M21,23H28M16,28H18M21,28H28" stroke="#555" stroke-width="2"/></g><g transform="translate(1008,33)"><path d="M0,0H18L26,8V29H0Z" fill="#d9d9d9"/><path d="M18,0V8H26" fill="#f0f0f0"/><path d="M4,0V29M21,10V29M0,5H17M0,24H26" stroke="#b0b0b0" stroke-width="1.5"/><g transform="translate(24,25) rotate(-50) scale(0.9)"><path d="M-9,-4.5 H6 V4.5 H-9 L-16,0 Z" fill="#f4ca74" stroke="#384252" stroke-width="1.5"/><path d="M-16,0 L-11,-2.8 V2.8Z" fill="#bdbdbd"/><path d="M6,-4.5 H9 A4.5,4.5 0 0 1 9,4.5 H6Z" fill="#e8525a" stroke="#384252" stroke-width="1.5"/></g></g><g transform="translate(1156,32.7)"><path d="M0,0H19V9H28V32H0Z" fill="#d9d9d9"/><path d="M21,0L28,7H21Z" fill="#f0f0f0"/><path d="M-4,10H7V3L20,13L7,23V17H-4Z" fill="#76c6f7" stroke="#384252" stroke-width="1.6"/></g><g transform="translate(1218,32.7)"><path d="M0,0H19V9H28V32H0Z" fill="#d9d9d9"/><path d="M21,0L28,7H21Z" fill="#f0f0f0"/><path d="M12,15H23V9L33,19.5L23,30V24H12Z" fill="#76c6f7" stroke="#384252" stroke-width="1.6"/></g><g transform="translate(1284,40)"><path d="M0,0H26V6H32V24H0Z" fill="#d9d9d9"/><path d="M28,0L32,4H28Z" fill="#f0f0f0"/></g><g transform="translate(1284,32.7)"><path d="M6,20 V5 A4.5,4.5 0 0 1 15,5 V16 A2.2,2.2 0 0 1 10.6,16 V6" fill="none" stroke="#76c6f7" stroke-width="2.4"/></g><g transform="translate(1350,35.7)"><path d="M0,0H28V28.3H3L0,25.3Z" fill="#bcbcbc"/><rect x="5.6000000000000005" y="0" width="16.8" height="10.754" fill="#384252"/><rect x="6.72" y="0" width="14.56" height="9.339" fill="#f0f0f0"/><rect x="5.6000000000000005" y="18.678" width="16.8" height="9.622000000000002" fill="#384252"/><rect x="6.72" y="20.376" width="14.56" height="7.924000000000001" fill="#f0f0f0"/><rect x="8.4" y="22.074" width="2" height="3.9620000000000006" fill="#384252"/></g><circle cx="1373" cy="41.6" r="9.5" fill="#384252"/><circle cx="1373" cy="41.6" r="7.8" fill="none" stroke="#76c6f7" stroke-width="2"/><path d="M1365,41.6H1381M1373,34V49M1367,38H1379M1367,45H1379" stroke="#76c6f7" stroke-width="1.4"/><ellipse cx="1373" cy="41.6" rx="3.4" ry="7.8" fill="none" stroke="#76c6f7" stroke-width="1.4"/><g transform="translate(1494,33)"><path d="M1,27 V1 H27 V15" fill="none" stroke="#f0f0f0" stroke-width="2.2"/><path d="M1,27H12" stroke="#f0f0f0" stroke-width="2.2"/><circle cx="23" cy="23" r="6" fill="none" stroke="#f0f0f0" stroke-width="2.3"/><path d="M27,27.5L31,31.5" stroke="#d8a86e" stroke-width="2.5"/></g><g transform="translate(1559,32.6)"><path d="M13,30 C8,28 4,24 1,21 C0,19.5 1,18 3,18.5 L8,22 L5,7 C4.5,5 7,4 8,6 L11,15 L11,2.5 C11,0 15,0 15,2.5 L15,15 L18,4 C18.5,2 21.5,2.5 21,4.5 L19,16 L24,8 C25,6.5 27.5,7.5 26.8,9.5 L21,22 C20,28 18,31 13,30Z" fill="#d9d9d9"/></g><g transform="translate(1627,32.6)"><path d="M15,0V32" stroke="#76c6f7" stroke-width="2"/><path d="M12.5,15.5 C4,16 0.5,19 0.5,22 C0.5,26 7,28.5 15,28.5 C23,28.5 29.5,26 29.5,22 C29.5,19 25,16 19,15.5" fill="none" stroke="#f0f0f0" stroke-width="2.2"/><path d="M23,13.5 L18.5,16.5 L24,19Z" fill="#f0f0f0"/><path d="M15,10.5V14.5M15,17V20" stroke="#384252" stroke-width="2.5"/></g><g transform="translate(1772,33)"><rect x="0" y="0" width="24" height="28" fill="#d9d9d9"/><rect x="4" y="3" width="16" height="10" fill="#384252"/><rect x="5" y="4" width="14" height="8" fill="#76c6f7"/><path d="M4,17H16M4,22H12" stroke="#707070" stroke-width="1.6"/><g transform="translate(23,22) rotate(-45)"><rect x="-9" y="-5" width="12" height="10" rx="1" fill="#f4ca74" stroke="#384252" stroke-width="1.4"/><rect x="3" y="-3.5" width="5" height="7" fill="#f0f0f0" stroke="#384252" stroke-width="1.2"/><rect x="8" y="-1.5" width="4" height="3" fill="#f0f0f0"/></g></g><g transform="translate(1836,33)"><path d="M13,0 L8,9 H14 L10,17 L21,6 H15 L19,0Z" fill="#f4ca74"/><rect x="14.5" y="14" width="18" height="18" fill="#f0f0f0"/><path d="M18,19H20M22,19H29M18,23H20M22,23H29M18,27H20M22,27H29" stroke="#3b8fe0" stroke-width="2"/><path d="M0,10 L13,22 L7.5,22.5 L11,31 L8,32 L4.5,24 L0,28Z" fill="#f0f0f0" stroke="#384252" stroke-width="1"/></g><g transform="translate(1902,33)"><path d="M0,0H18V8H10V18H0Z" fill="#d9d9d9"/><circle cx="21.5" cy="10" r="9.5" fill="#7dd396" stroke="#384252" stroke-width="1.5"/><circle cx="10.5" cy="21.5" r="9.5" fill="#7dd396" stroke="#384252" stroke-width="1.5"/><path d="M20,7V33M8,21H32" stroke="#384252" stroke-width="4"/><path d="M20,7V33M8,21H32" stroke="#fff" stroke-width="2"/><rect x="16.5" y="17.5" width="7" height="7" fill="none" stroke="#fff" stroke-width="1.5"/></g><g transform="translate(1967,33)"><circle cx="7" cy="7" r="7" fill="#7dd396"/><circle cx="25" cy="25" r="7.2" fill="#76c6f7"/><path d="M16,4.5H23.5V10" fill="none" stroke="#fff" stroke-width="2"/><path d="M19.5,9.5H27.5L23.5,14Z" fill="#fff"/></g><g transform="translate(2036,33)"><path d="M0,0H19V7H26V28H0Z" fill="#d9d9d9"/><path d="M21,0L26,5H21Z" fill="#f0f0f0"/><path d="M12,26 L9,33 H22 L19,26 Z" fill="#f4ca74"/><path d="M14,8H17V26H14Z" fill="#d8a86e"/><path d="M12,22H19V26H12Z" fill="#d8a86e"/></g><g transform="translate(2099,36)"><circle cx="10" cy="13" r="9.5" fill="#707782" stroke="#d9d9d9" stroke-width="2"/><rect x="11" y="13" width="19" height="16" fill="#5c6470" stroke="#d9d9d9" stroke-width="2"/><path d="M17,0L14,13M24,0L21,13M12,4H26M11,9H25" stroke="#76c6f7" stroke-width="2"/></g><circle cx="2138" cy="38" r="11.1" fill="#f3f3f3"/><circle cx="2138" cy="38" r="9.5" fill="#f26f3b"/><g transform="translate(2245,33)"><g transform="translate(4,6)"><path d="M0,0H20V8H28V26H0Z" fill="#d9d9d9"/><path d="M22,0L28,6H22Z" fill="#f0f0f0"/></g><path d="M8,0 L10.5,5 L16,3 L13,8 L18,11 L12.5,12 L13,18 L9,14 L5,18 L5.5,12 L0,11 L5,8 L2,3 L7.5,5Z" fill="#f4ca74" stroke="#384252" stroke-width="1"/><circle cx="17" cy="23" r="7.5" fill="#6e7581" stroke="#f0f0f0" stroke-width="2.2"/><path d="M22,28.5L25.5,32" stroke="#d8a86e" stroke-width="2.4"/></g><g transform="translate(2310,33)"><path d="M0,0H15V5H20V18H0Z" fill="#d9d9d9"/><path d="M17,0L20,3H17Z" fill="#f0f0f0"/><circle cx="9" cy="10" r="5.5" fill="#6e7581" stroke="#f0f0f0" stroke-width="2"/><path d="M13,14L16,17" stroke="#d8a86e" stroke-width="2"/><path d="M3,21V28H9" fill="none" stroke="#f0f0f0" stroke-width="2"/><path d="M8,25L12,28L8,31Z" fill="#f0f0f0"/><path d="M16,20H14V32H16M28,20H31V32H28" fill="none" stroke="#d9d9d9" stroke-width="1.6"/><rect x="19" y="23" width="8" height="7" fill="#6e7581" stroke="#d9d9d9" stroke-width="1.6"/></g><g transform="translate(2454,35)"><rect x="0" y="2" width="13" height="28" fill="#d9d9d9"/><g transform="translate(16,2)"><path d="M0,0H8V6H14V28H0Z" fill="#d9d9d9"/><path d="M10,0L14,4H10Z" fill="#f0f0f0"/></g><path d="M14.5,0V32" stroke="#76c6f7" stroke-width="2"/><rect x="6" y="7" width="5" height="7" fill="none" stroke="#e0202a" stroke-width="1.8"/><rect x="4" y="17.5" width="7" height="4.5" fill="none" stroke="#10a030" stroke-width="1.8"/><rect x="19.5" y="12" width="6" height="4" fill="none" stroke="#8a8a8a" stroke-width="1.6"/><rect x="19.5" y="19" width="5" height="5" fill="none" stroke="#8a8a8a" stroke-width="1.6"/></g><g transform="translate(2520,38)"><path d="M0,9 L28,0 L21,22 L14,14 L11,23 L9,12Z" fill="#76c6f7"/><path d="M9,12 L28,0 L14,14" fill="none" stroke="#384252" stroke-width="1.4"/></g><circle cx="2558" cy="38" r="11.1" fill="#f3f3f3"/><circle cx="2558" cy="38" r="9.5" fill="#f26f3b"/><g transform="translate(2586,35)"><rect x="6" y="8" width="27" height="22" fill="#d9d9d9"/><rect x="1" y="1" width="25" height="21" fill="#525b68" stroke="#76c6f7" stroke-width="1.8"/><path d="M3,12 C5,3 7,18 9,12 C11,8 13,14 16,12 C19,11 21,14 24,13" fill="none" stroke="#76c6f7" stroke-width="1.2"/></g><circle cx="2624" cy="38" r="11.1" fill="#f3f3f3"/><circle cx="2624" cy="38" r="9.5" fill="#f26f3b"/><path d="M8.4,149.7 H25.4 L16.9,158.7Z" fill="#ffffff"/><rect x="346.5" y="144.29999999999998" width="3.8" height="18.2" fill="#f2f2f2" transform="rotate(0 348.4 153.39999999999998)"/><rect x="346.5" y="144.29999999999998" width="3.8" height="18.2" fill="#f2f2f2" transform="rotate(45 348.4 153.39999999999998)"/><rect x="346.5" y="144.29999999999998" width="3.8" height="18.2" fill="#f2f2f2" transform="rotate(90 348.4 153.39999999999998)"/><rect x="346.5" y="144.29999999999998" width="3.8" height="18.2" fill="#f2f2f2" transform="rotate(135 348.4 153.39999999999998)"/><circle cx="348.4" cy="153.39999999999998" r="5.9" fill="#f2f2f2"/><circle cx="348.4" cy="153.39999999999998" r="1.9" fill="#384252"/><path d="M8.4,343.7 H25.4 L16.9,352.7Z" fill="#ffffff"/><rect x="346.5" y="338.29999999999995" width="3.8" height="18.2" fill="#f2f2f2" transform="rotate(0 348.4 347.4)"/><rect x="346.5" y="338.29999999999995" width="3.8" height="18.2" fill="#f2f2f2" transform="rotate(45 348.4 347.4)"/><rect x="346.5" y="338.29999999999995" width="3.8" height="18.2" fill="#f2f2f2" transform="rotate(90 348.4 347.4)"/><rect x="346.5" y="338.29999999999995" width="3.8" height="18.2" fill="#f2f2f2" transform="rotate(135 348.4 347.4)"/><circle cx="348.4" cy="347.4" r="5.9" fill="#f2f2f2"/><circle cx="348.4" cy="347.4" r="1.9" fill="#384252"/><path d="M8.4,486.5 H25.4 L16.9,495.5Z" fill="#ffffff"/><rect x="346.5" y="481.09999999999997" width="3.8" height="18.2" fill="#f2f2f2" transform="rotate(0 348.4 490.2)"/><rect x="346.5" y="481.09999999999997" width="3.8" height="18.2" fill="#f2f2f2" transform="rotate(45 348.4 490.2)"/><rect x="346.5" y="481.09999999999997" width="3.8" height="18.2" fill="#f2f2f2" transform="rotate(90 348.4 490.2)"/><rect x="346.5" y="481.09999999999997" width="3.8" height="18.2" fill="#f2f2f2" transform="rotate(135 348.4 490.2)"/><circle cx="348.4" cy="490.2" r="5.9" fill="#f2f2f2"/><circle cx="348.4" cy="490.2" r="1.9" fill="#384252"/><path d="M8.4,678.5 H25.4 L16.9,687.5Z" fill="#ffffff"/><rect x="346.5" y="673.1" width="3.8" height="18.2" fill="#f2f2f2" transform="rotate(0 348.4 682.2)"/><rect x="346.5" y="673.1" width="3.8" height="18.2" fill="#f2f2f2" transform="rotate(45 348.4 682.2)"/><rect x="346.5" y="673.1" width="3.8" height="18.2" fill="#f2f2f2" transform="rotate(90 348.4 682.2)"/><rect x="346.5" y="673.1" width="3.8" height="18.2" fill="#f2f2f2" transform="rotate(135 348.4 682.2)"/><circle cx="348.4" cy="682.2" r="5.9" fill="#f2f2f2"/><circle cx="348.4" cy="682.2" r="1.9" fill="#384252"/><path d="M8.4,870.5 H25.4 L16.9,879.5Z" fill="#ffffff"/><rect x="346.5" y="865.1" width="3.8" height="18.2" fill="#f2f2f2" transform="rotate(0 348.4 874.2)"/><rect x="346.5" y="865.1" width="3.8" height="18.2" fill="#f2f2f2" transform="rotate(45 348.4 874.2)"/><rect x="346.5" y="865.1" width="3.8" height="18.2" fill="#f2f2f2" transform="rotate(90 348.4 874.2)"/><rect x="346.5" y="865.1" width="3.8" height="18.2" fill="#f2f2f2" transform="rotate(135 348.4 874.2)"/><circle cx="348.4" cy="874.2" r="5.9" fill="#f2f2f2"/><circle cx="348.4" cy="874.2" r="1.9" fill="#384252"/><path d="M8.4,1014.5 H25.4 L16.9,1023.5Z" fill="#ffffff"/><rect x="346.5" y="1009.1" width="3.8" height="18.2" fill="#f2f2f2" transform="rotate(0 348.4 1018.2)"/><rect x="346.5" y="1009.1" width="3.8" height="18.2" fill="#f2f2f2" transform="rotate(45 348.4 1018.2)"/><rect x="346.5" y="1009.1" width="3.8" height="18.2" fill="#f2f2f2" transform="rotate(90 348.4 1018.2)"/><rect x="346.5" y="1009.1" width="3.8" height="18.2" fill="#f2f2f2" transform="rotate(135 348.4 1018.2)"/><circle cx="348.4" cy="1018.2" r="5.9" fill="#f2f2f2"/><circle cx="348.4" cy="1018.2" r="1.9" fill="#384252"/><path d="M8.4,1158 H25.4 L16.9,1167Z" fill="#ffffff"/><rect x="346.5" y="1152.6000000000001" width="3.8" height="18.2" fill="#f2f2f2" transform="rotate(0 348.4 1161.7)"/><rect x="346.5" y="1152.6000000000001" width="3.8" height="18.2" fill="#f2f2f2" transform="rotate(45 348.4 1161.7)"/><rect x="346.5" y="1152.6000000000001" width="3.8" height="18.2" fill="#f2f2f2" transform="rotate(90 348.4 1161.7)"/><rect x="346.5" y="1152.6000000000001" width="3.8" height="18.2" fill="#f2f2f2" transform="rotate(135 348.4 1161.7)"/><circle cx="348.4" cy="1161.7" r="5.9" fill="#f2f2f2"/><circle cx="348.4" cy="1161.7" r="1.9" fill="#384252"/><path d="M8.4,1302.5 H25.4 L16.9,1311.5Z" fill="#ffffff"/><rect x="346.5" y="1297.1000000000001" width="3.8" height="18.2" fill="#f2f2f2" transform="rotate(0 348.4 1306.2)"/><rect x="346.5" y="1297.1000000000001" width="3.8" height="18.2" fill="#f2f2f2" transform="rotate(45 348.4 1306.2)"/><rect x="346.5" y="1297.1000000000001" width="3.8" height="18.2" fill="#f2f2f2" transform="rotate(90 348.4 1306.2)"/><rect x="346.5" y="1297.1000000000001" width="3.8" height="18.2" fill="#f2f2f2" transform="rotate(135 348.4 1306.2)"/><circle cx="348.4" cy="1306.2" r="5.9" fill="#f2f2f2"/><circle cx="348.4" cy="1306.2" r="1.9" fill="#384252"/><path d="M8.4,1446 H25.4 L16.9,1455Z" fill="#ffffff"/><rect x="346.5" y="1440.6000000000001" width="3.8" height="18.2" fill="#f2f2f2" transform="rotate(0 348.4 1449.7)"/><rect x="346.5" y="1440.6000000000001" width="3.8" height="18.2" fill="#f2f2f2" transform="rotate(45 348.4 1449.7)"/><rect x="346.5" y="1440.6000000000001" width="3.8" height="18.2" fill="#f2f2f2" transform="rotate(90 348.4 1449.7)"/><rect x="346.5" y="1440.6000000000001" width="3.8" height="18.2" fill="#f2f2f2" transform="rotate(135 348.4 1449.7)"/><circle cx="348.4" cy="1449.7" r="5.9" fill="#f2f2f2"/><circle cx="348.4" cy="1449.7" r="1.9" fill="#384252"/><rect x="8" y="320" width="352" height="2.5" fill="#20262e"/><rect x="8" y="464" width="352" height="2.5" fill="#20262e"/><rect x="8" y="656" width="352" height="2.5" fill="#20262e"/><rect x="8" y="848" width="352" height="2.5" fill="#20262e"/><rect x="8" y="992" width="352" height="2.5" fill="#20262e"/><rect x="8" y="1135.5" width="352" height="2.5" fill="#20262e"/><rect x="8" y="1279.5" width="352" height="2.5" fill="#20262e"/><rect x="8" y="1423.5" width="352" height="2.5" fill="#20262e"/><rect x="8" y="1567" width="352" height="2.5" fill="#20262e"/><path d="M27.5,240.5 L76.5,191.5" fill="none" stroke="#d9d9d9" stroke-width="2.2" /><rect x="20.0" y="242.0" width="6" height="6" fill="#76c6f7"/><rect x="78.0" y="184.0" width="6" height="6" fill="#76c6f7"/><path d="M114,231 H148" fill="none" stroke="#d9d9d9" stroke-width="2.2" /><path d="M155,201 A15,15 0 0 1 155,231" fill="none" stroke="#d9d9d9" stroke-width="2.2" /><rect x="108.0" y="228.0" width="6" height="6" fill="#76c6f7"/><rect x="148.0" y="228.0" width="6" height="6" fill="#76c6f7"/><rect x="148.0" y="198.0" width="6" height="6" fill="#76c6f7"/><circle cx="228" cy="215.6" r="30.5" fill="none" stroke="#d9d9d9" stroke-width="2.3"/><rect x="225.0" y="212.8" width="6" height="6" fill="#76c6f7"/><path d="M232,211 L243,200" fill="none" stroke="#76c6f7" stroke-width="2.6" /><path d="M248,195 L236,199 L244,207Z" fill="#76c6f7"/><path d="M290,195 H346 V234 M344,237.8 H286 V198" fill="none" stroke="#d9d9d9" stroke-width="2.2" /><rect x="284.0" y="192.0" width="6" height="6" fill="#76c6f7"/><rect x="342.0" y="234.0" width="6" height="6" fill="#76c6f7"/><path d="M262,258 L270,250 V258Z" fill="#8e8e8e"/><path d="M350,258 L358,250 V258Z" fill="#8e8e8e"/><path d="M18,296 C20,285 28,275 42,273" fill="none" stroke="#d9d9d9" stroke-width="2" stroke-dasharray="5 3"/><rect x="15.75" y="295.75" width="4.5" height="4.5" fill="#76c6f7"/><rect x="22.75" y="278.75" width="4.5" height="4.5" fill="#76c6f7"/><rect x="39.75" y="270.75" width="4.5" height="4.5" fill="#76c6f7"/><path d="M60,299 C61,290 63,281 66,277 L82,292 C85,288 87,280 88,273" fill="none" stroke="#d9d9d9" stroke-width="2" stroke-dasharray="5 3"/><rect x="57.75" y="296.75" width="4.5" height="4.5" fill="#76c6f7"/><rect x="63.75" y="274.75" width="4.5" height="4.5" fill="#76c6f7"/><rect x="79.75" y="289.75" width="4.5" height="4.5" fill="#76c6f7"/><rect x="85.75" y="270.75" width="4.5" height="4.5" fill="#76c6f7"/><path d="M108,278H128M108,294H128" fill="none" stroke="#d9d9d9" stroke-width="2.2" /><path d="M102,286H112M115,286H119M122,286H134" fill="none" stroke="#76c6f7" stroke-width="2.2" /><path d="M150,299 L174,275" fill="none" stroke="#d9d9d9" stroke-width="2.2" /><path d="M145.7,303 L148,292 L156,300Z M178,270 L175.5,281 L167.5,273Z" fill="#d9d9d9"/><rect x="154.75" y="284.75" width="4.5" height="4.5" fill="#76c6f7"/><rect x="164.75" y="274.75" width="4.5" height="4.5" fill="#76c6f7"/><ellipse cx="206" cy="286" rx="14" ry="9.5" fill="none" stroke="#d9d9d9" stroke-width="2"/><rect x="202.75" y="283.75" width="4.5" height="4.5" fill="#76c6f7"/><rect x="202.75" y="274.25" width="4.5" height="4.5" fill="#76c6f7"/><rect x="217.25" y="283.75" width="4.5" height="4.5" fill="#76c6f7"/><path d="M238,275 A3,3 0 0 1 244,275 A3,3 0 0 1 250,275 A3,3 0 0 1 256,275 A3,3 0 0 1 262,275 A3,3 0 0 1 265,278 A3,3 0 0 1 265,283.3 A3,3 0 0 1 265,288.6 A3,3 0 0 1 265,293.9 A3,3 0 0 1 265,299.2 A3,3 0 0 1 262,297 A3,3 0 0 1 256,297 A3,3 0 0 1 250,297 A3,3 0 0 1 244,297 A3,3 0 0 1 238,297 A3,3 0 0 1 235,294 A3,3 0 0 1 235,288.7 A3,3 0 0 1 235,283.4 A3,3 0 0 1 235,278.1 A3,3 0 0 1 235,272.8 A3,3 0 0 1 238,275Z" fill="none" stroke="#d9d9d9" stroke-width="2"/><path d="M278.3,270.7 L293.6,285.2 M309.6,270.7 L297.4,283 M278.3,302 L290.5,290" fill="none" stroke="#d9d9d9" stroke-width="2.2" /><rect x="291.35" y="283.75" width="4.5" height="4.5" fill="#76c6f7"/><path d="M321.9,284.7 H331 L335.6,273 L340.7,299 L345.3,284.7 H354" fill="none" stroke="#d9d9d9" stroke-width="2" /><path d="M44,308 L52,300 V308Z" fill="#8e8e8e"/><path d="M88,308 L96,300 V308Z" fill="#8e8e8e"/><path d="M132,308 L140,300 V308Z" fill="#8e8e8e"/><path d="M176,308 L184,300 V308Z" fill="#8e8e8e"/><path d="M220,308 L228,300 V308Z" fill="#8e8e8e"/><path d="M264,308 L272,300 V308Z" fill="#8e8e8e"/><path d="M308,308 L316,300 V308Z" fill="#8e8e8e"/><path d="M29,376 V440 M75,376 V440 M19.9,385 H84 M19.9,431 H84" fill="none" stroke="#d9d9d9" stroke-width="2.3" /><g><clipPath id="hc20"><rect x="32" y="388" width="40.5" height="40"/></clipPath><path d="M-8,428 L32,388 M2,428 L42,388 M12,428 L52,388 M22,428 L62,388 M32,428 L72,388 M42,428 L82,388 M52,428 L92,388 M62,428 L102,388 M72,428 L112,388" stroke="#76c6f7" stroke-width="2.2" clip-path="url(#hc20)"/></g><path d="M117,376 V440 M163,376 V440 M107.9,385 H172 M107.9,431 H172" fill="none" stroke="#d9d9d9" stroke-width="2.3" /><g><clipPath id="hc108"><rect x="120" y="388" width="40.5" height="40"/></clipPath><path d="M80,428 L120,388 M90,428 L130,388 M100,428 L140,388 M110,428 L150,388 M120,428 L160,388 M130,428 L170,388 M140,428 L180,388 M150,428 L190,388 M160,428 L200,388" stroke="#76c6f7" stroke-width="2.2" clip-path="url(#hc108)"/></g><path d="M127,386 C128,381 131,378 135,378 H145 C149,378 152,381 153,386Z" fill="#ffffff" stroke="#384252" stroke-width="1.5"/><path d="M174,450 L182,442 V450Z" fill="#8e8e8e"/><defs><linearGradient id="grd" x1="0" y1="0" x2="0" y2="1"><stop offset="0" stop-color="#7cc7f6"/><stop offset="0.55" stop-color="#8797a8"/><stop offset="1" stop-color="#3e4757"/></linearGradient></defs><path d="M205,376 V440 M251,376 V440 M195.9,385 H260 M195.9,431 H260" fill="none" stroke="#d9d9d9" stroke-width="2.3" /><rect x="208" y="388" width="40" height="40" fill="url(#grd)"/><path d="M283,370V402 M305,370V402 M278,375H310 M278,397H310" fill="none" stroke="#76c6f7" stroke-width="2" /><path d="M322,373 H340 L354,386 V399 H322Z" fill="#d9d9d9"/><circle cx="337" cy="386" r="5" fill="#384252"/><clipPath id="wc"><rect x="278" y="414" width="32" height="32"/></clipPath><rect x="278" y="414" width="32" height="32" fill="#384252"/><path d="M243,446 L275,414 M250,446 L282,414 M257,446 L289,414 M264,446 L296,414 M271,446 L303,414 M278,446 L310,414 M285,446 L317,414 M292,446 L324,414 M299,446 L331,414 M306,446 L338,414" stroke="#d9d9d9" stroke-width="2.5" clip-path="url(#wc)"/><rect x="282" y="418" width="24" height="24" fill="#384252"/><path d="M284,421 H292 V427 H302 V439 H284Z" fill="#8fd0f8"/><g transform="translate(22,543) scale(0.95)"><rect x="1" y="1" width="36" height="28" fill="#646c78" stroke="#d9d9d9" stroke-width="2.2"/><circle cx="37" cy="29" r="13" fill="#646c78" stroke="#d9d9d9" stroke-width="2.2"/><path d="M37,16V29H24" fill="none" stroke="#d9d9d9" stroke-width="2.2"/><rect x="-2" y="26" width="6" height="6" fill="#d9d9d9"/></g><path d="M67,520 L70,531 L80,526 L74,535 L83,540 L73,542 L75,552 L67,545 L60,552 L61,542 L51,539 L60,534 L55,525 L65,530Z" fill="#f4ca74"/><g transform="translate(137,522)"><path d="M0,0H24V9H33V44H0Z" fill="#76c6f7"/><path d="M26,0L33,7H26Z" fill="#f0f0f0"/></g><g transform="translate(110,543) scale(0.95)"><rect x="1" y="1" width="36" height="28" fill="#646c78" stroke="#d9d9d9" stroke-width="2.2"/><circle cx="37" cy="29" r="13" fill="#646c78" stroke="#d9d9d9" stroke-width="2.2"/><path d="M37,16V29H24" fill="none" stroke="#d9d9d9" stroke-width="2.2"/><rect x="-2" y="26" width="6" height="6" fill="#d9d9d9"/></g><g transform="translate(198,543) scale(0.95)"><rect x="1" y="1" width="36" height="28" fill="#646c78" stroke="#d9d9d9" stroke-width="2.2"/><circle cx="37" cy="29" r="13" fill="#646c78" stroke="#d9d9d9" stroke-width="2.2"/><path d="M37,16V29H24" fill="none" stroke="#d9d9d9" stroke-width="2.2"/><rect x="-2" y="26" width="6" height="6" fill="#d9d9d9"/></g><g transform="translate(243,540) rotate(-50) scale(1.25)"><path d="M-9,-4.5 H6 V4.5 H-9 L-16,0 Z" fill="#f4ca74" stroke="#384252" stroke-width="1.5"/><path d="M-16,0 L-11,-2.8 V2.8Z" fill="#bdbdbd"/><path d="M6,-4.5 H9 A4.5,4.5 0 0 1 9,4.5 H6Z" fill="#e8525a" stroke="#384252" stroke-width="1.5"/></g><g transform="translate(284,522) scale(1.9)"><path d="M0,2 L13,0 L32,19 L19,32 L2,15Z" fill="#d9d9d9"/><circle cx="8" cy="7" r="2.6" fill="#384252"/><path d="M13,15L21,23M10,18L18,26" stroke="#777" stroke-width="1.2"/></g><g transform="translate(330,543) rotate(-50) scale(1.1)"><path d="M-9,-4.5 H6 V4.5 H-9 L-16,0 Z" fill="#f4ca74" stroke="#384252" stroke-width="1.5"/><path d="M-16,0 L-11,-2.8 V2.8Z" fill="#bdbdbd"/><path d="M6,-4.5 H9 A4.5,4.5 0 0 1 9,4.5 H6Z" fill="#e8525a" stroke="#384252" stroke-width="1.5"/></g><path d="M350,595 L358,587 V595Z" fill="#8e8e8e"/><g transform="translate(15,606) scale(1.0)"><path d="M0,2 L13,0 L32,19 L19,32 L2,15Z" fill="#d9d9d9"/><circle cx="8" cy="7" r="2.6" fill="#384252"/><path d="M13,15L21,23M10,18L18,26" stroke="#777" stroke-width="1.2"/></g><g transform="translate(58,620) scale(0.55)"><rect x="1" y="1" width="36" height="28" fill="#646c78" stroke="#d9d9d9" stroke-width="2.2"/><circle cx="37" cy="29" r="13" fill="#646c78" stroke="#d9d9d9" stroke-width="2.2"/><path d="M37,16V29H24" fill="none" stroke="#d9d9d9" stroke-width="2.2"/><rect x="-2" y="26" width="6" height="6" fill="#d9d9d9"/></g><rect x="72" y="606" width="18" height="16" fill="#f0f0f0"/><rect x="72" y="606" width="18" height="4" fill="#999"/><path d="M76,614H78M80,614H87M76,618H78M80,618H87" stroke="#555" stroke-width="1.6"/><g transform="translate(102,620) scale(0.55)"><rect x="1" y="1" width="36" height="28" fill="#646c78" stroke="#d9d9d9" stroke-width="2.2"/><circle cx="37" cy="29" r="13" fill="#646c78" stroke="#d9d9d9" stroke-width="2.2"/><path d="M37,16V29H24" fill="none" stroke="#d9d9d9" stroke-width="2.2"/><rect x="-2" y="26" width="6" height="6" fill="#d9d9d9"/></g><g transform="translate(120,606)"><path d="M0,0H14V16H3L0,13Z" fill="#bcbcbc"/><rect x="2.8000000000000003" y="0" width="8.4" height="6.08" fill="#384252"/><rect x="3.36" y="0" width="7.28" height="5.28" fill="#f0f0f0"/><rect x="2.8000000000000003" y="10.56" width="8.4" height="5.44" fill="#384252"/><rect x="3.36" y="11.52" width="7.28" height="4.48" fill="#f0f0f0"/><rect x="4.2" y="12.48" width="2" height="2.24" fill="#384252"/></g><rect x="147" y="607" width="27" height="27" fill="#646c78" stroke="#d9d9d9" stroke-width="2"/><path d="M172,627V640M165.5,633.5H178.5" stroke="#384252" stroke-width="6"/><path d="M172,627V640M165.5,633.5H178.5" stroke="#76c6f7" stroke-width="3"/><g transform="translate(191,612) scale(0.9)"><path d="M0,2 L13,0 L32,19 L19,32 L2,15Z" fill="#d9d9d9"/><circle cx="8" cy="7" r="2.6" fill="#384252"/><path d="M13,15L21,23M10,18L18,26" stroke="#777" stroke-width="1.2"/></g><path d="M209,612 A7,7 0 0 1 222,614 M222,620 A7,7 0 0 1 209,618" fill="none" stroke="#4fcf6f" stroke-width="2.4"/><g transform="translate(235,612) scale(0.9)"><path d="M0,2 L13,0 L32,19 L19,32 L2,15Z" fill="#d9d9d9"/><circle cx="8" cy="7" r="2.6" fill="#384252"/><path d="M13,15L21,23M10,18L18,26" stroke="#777" stroke-width="1.2"/></g><rect x="253" y="606" width="12" height="12" fill="none" stroke="#76c6f7" stroke-width="2"/><rect x="256" y="609" width="6" height="6" fill="#76c6f7"/><g transform="translate(279,606) scale(0.45)"><g transform="translate(0,0) scale(1.0)"><rect x="1" y="1" width="36" height="28" fill="#646c78" stroke="#d9d9d9" stroke-width="2.2"/><circle cx="37" cy="29" r="13" fill="#646c78" stroke="#d9d9d9" stroke-width="2.2"/><path d="M37,16V29H24" fill="none" stroke="#d9d9d9" stroke-width="2.2"/><rect x="-2" y="26" width="6" height="6" fill="#d9d9d9"/></g></g><path d="M301,615H306V620" fill="none" stroke="#ffffff" stroke-width="1.8" /><g transform="translate(286,620) scale(0.5)"><rect x="1" y="1" width="36" height="24" fill="#646c78" stroke="#76c6f7" stroke-width="3"/><circle cx="37" cy="25" r="12" fill="#646c78" stroke="#76c6f7" stroke-width="3"/></g><path d="M52,712 L62,724 H56 V740 H72 V734 L84,744 L72,754 V748 H56 V764 H62 L52,776 L42,764 H48 V748 H32 V754 L20,744 L32,734 V740 H48 V724 H42Z" fill="#ffffff"/><circle cx="108.5" cy="712" r="5.5" fill="none" stroke="#d9d9d9" stroke-width="2"/><path d="M115,710H124V716" fill="none" stroke="#ffffff" stroke-width="1.8" /><path d="M120,715H128L124,720Z" fill="#ffffff"/><circle cx="115" cy="731" r="6" fill="none" stroke="#76c6f7" stroke-width="2.3"/><circle cx="126" cy="731" r="6" fill="none" stroke="#76c6f7" stroke-width="2.3"/><path d="M171,713 A13,13 0 1 1 158,709" fill="none" stroke="#ffffff" stroke-width="2" /><path d="M160,704 L167,709 L160,714Z" fill="#ffffff"/><path d="M196,716H228" fill="none" stroke="#76c6f7" stroke-width="1.5" stroke-dasharray="4 2"/><path d="M243,716H260" fill="none" stroke="#ffffff" stroke-width="1.8" /><path d="M212,726 L224,718 L240,747 L246,750 L236,752Z M238,716 L240,745 L232,752 L229,746Z" fill="#ffffff"/><circle cx="232" cy="764" r="7" fill="none" stroke="#ffffff" stroke-width="3.5"/><circle cx="245" cy="758" r="7" fill="none" stroke="#ffffff" stroke-width="3.5"/><path d="M262,786 L270,778 V786Z" fill="#8e8e8e"/><path d="M279,736 V728 C279,718 284,713 294,713" fill="none" stroke="#76c6f7" stroke-width="2.2" /><path d="M298,713H310" fill="none" stroke="#ffffff" stroke-width="1.8" /><path d="M279,740V745" fill="none" stroke="#ffffff" stroke-width="1.8" /><path d="M309,744 L317,736 V744Z" fill="#8e8e8e"/><rect x="323" y="708" width="11" height="11" fill="#d4d4d4"/><rect x="337" y="708" width="11" height="11" fill="#76c6f7"/><rect x="323" y="722" width="11" height="11" fill="#76c6f7"/><rect x="337" y="722" width="11" height="11" fill="#76c6f7"/><path d="M352,744 L360,736 V744Z" fill="#8e8e8e"/><path d="M115,752 V779 H104Z" fill="none" stroke="#d9d9d9" stroke-width="2"/><path d="M119,752 V779 H130Z" fill="none" stroke="#76c6f7" stroke-width="2"/><rect x="148" y="752" width="18" height="18" fill="none" stroke="#d9d9d9" stroke-width="1.8" stroke-dasharray="3 2"/><path d="M163,762 L178,775 L171,776 L175,783 L172,785 L168,778 L163,782Z" fill="#ffffff"/><path d="M174,756H180M177,753V759" stroke="#ffffff" stroke-width="1.5"/><path d="M310,754 H291 A9,9 0 0 0 291,772 H310" fill="none" stroke="#76c6f7" stroke-width="2.3" /><path d="M310,759 H292 A4,4 0 0 0 292,767 H310" fill="none" stroke="#ffffff" stroke-width="2" /><path d="M325,760 L331,753 H353 V774 L347,781 H325Z M325,760 H347 V781 M347,760 L353,753" fill="none" stroke="#76c6f7" stroke-width="2" /><rect x="326" y="761" width="20" height="19" fill="none" stroke="#ffffff" stroke-width="2"/><path d="M15,799 V830 H25 V799Z" fill="none" stroke="#d9d9d9" stroke-width="2" /><path d="M29,799 H33 L45,830 H29" fill="none" stroke="#76c6f7" stroke-width="2" /><path d="M20,820 H36" fill="none" stroke="#ffffff" stroke-width="1.8" /><path d="M34,816 L39,820 L34,824Z" fill="#ffffff"/><path d="M58,804 L61,799 H77 V812 L74,816 H58Z" fill="#d4d4d4"/><path d="M64,821V827H71" fill="none" stroke="#ffffff" stroke-width="1.8" /><path d="M70,824L74,827L70,830Z" fill="#ffffff"/><rect x="76" y="816" width="14" height="14" fill="#76c6f7"/><path d="M102,799 H134 V830 H120 M102,799 V830" fill="none" stroke="#76c6f7" stroke-width="2" /><rect x="103" y="814" width="14" height="16" fill="none" stroke="#d9d9d9" stroke-width="2"/><path d="M146,830 L178,798" fill="none" stroke="#d9d9d9" stroke-width="1.8" /><path d="M155,805 L168,822" fill="none" stroke="#76c6f7" stroke-width="2.5" /><path d="M176,838 L184,830 V838Z" fill="#8e8e8e"/><path d="M190,813H222" fill="none" stroke="#d9d9d9" stroke-width="1.8" /><path d="M196,807 L206,813 L196,819Z M216,807 L206,813 L216,819Z" fill="#76c6f7"/><rect x="234" y="798" width="20" height="15" fill="#b9b9b9"/><rect x="246" y="808" width="19" height="17" fill="none" stroke="#d9d9d9" stroke-width="1.8"/><path d="M250,822 L261,822 L261,812Z" fill="#888"/><path d="M238,816V822H244" fill="none" stroke="#ffffff" stroke-width="1.6" /><path d="M259,800V806" fill="none" stroke="#ffffff" stroke-width="1.6" /><g transform="translate(279,798) scale(0.4)"><g transform="translate(0,0) scale(1.0)"><rect x="1" y="1" width="36" height="28" fill="#646c78" stroke="#d9d9d9" stroke-width="2.2"/><circle cx="37" cy="29" r="13" fill="#646c78" stroke="#d9d9d9" stroke-width="2.2"/><path d="M37,16V29H24" fill="none" stroke="#d9d9d9" stroke-width="2.2"/><rect x="-2" y="26" width="6" height="6" fill="#d9d9d9"/></g></g><path d="M282,818V826H290" fill="none" stroke="#ffffff" stroke-width="1.8" /><path d="M289,823L293,826L289,829Z" fill="#ffffff"/><circle cx="303" cy="824" r="6.5" fill="none" stroke="#76c6f7" stroke-width="2.2"/><path d="M337,797 V817 M333,822 H341 L343,830 H331Z" stroke="#d8a86e" stroke-width="2" fill="#f4ca74"/><path d="M334,818 H340 L341,822 H333Z" fill="#d8a86e"/><text x="52" y="963" font-family="Liberation Sans" font-size="75" fill="#d9d9d9" stroke="#d9d9d9" stroke-width="0.8" text-anchor="middle">A</text><text x="135" y="954" font-family="Liberation Sans" font-size="67" fill="#d9d9d9" stroke="#d9d9d9" stroke-width="0.8" text-anchor="middle">A</text><g transform="translate(158,953) rotate(-40) scale(1.0)"><rect x="2" y="-4" width="14" height="8" fill="#f0f0f0" stroke="#384252" stroke-width="1.2"/><path d="M2,-5 C-6,-6 -14,-2 -18,4 C-10,6 -3,5 2,5Z" fill="#d8a56a"/></g><text x="206" y="926" font-family="Liberation Sans" font-size="36" fill="#d9d9d9" text-anchor="middle">A</text><path d="M190,929H222" fill="none" stroke="#76c6f7" stroke-width="2" /><text x="250" y="911" font-family="Liberation Sans" font-weight="bold" font-size="13" fill="#d9d9d9" text-anchor="middle">ABC</text><path d="M242,918 L247,924 L257,914" fill="none" stroke="#4fcf6f" stroke-width="3.5" /><rect x="277" y="898" width="18" height="16" fill="#f0f0f0"/><path d="M281,902H283M285,902H292M281,906H283M285,906H292M281,910H283M285,910H292" stroke="#3b8fe0" stroke-width="1.5"/><rect x="286" y="913" width="24" height="17" fill="#cfcfcf"/><rect x="298" y="911" width="12" height="7" fill="#76c6f7"/><text x="303" y="911" font-family="Liberation Sans" font-weight="bold" font-size="16" fill="#76c6f7" text-anchor="middle">A</text><text x="337" y="904" font-family="Liberation Sans" font-weight="bold" font-size="11" fill="#d9d9d9" text-anchor="middle">PDF</text><path d="M327,908V917H333" fill="none" stroke="#ffffff" stroke-width="1.8" /><path d="M332,913.5 L337,917 L332,920.5Z" fill="#ffffff"/><text x="345" y="928" font-family="Liberation Sans" font-size="19" fill="#76c6f7" text-anchor="middle">A</text><rect x="190" y="942" width="17" height="17" fill="#cfcfcf"/><path d="M193,946H204M193,950H204M193,954H204" stroke="#777" stroke-width="1.4"/><text x="213" y="974" font-family="Liberation Sans" font-size="19" fill="#ffffff" text-anchor="middle">A</text><path d="M214,945H219V952" fill="none" stroke="#ffffff" stroke-width="1.5" /><circle cx="248" cy="955" r="12.5" fill="none" stroke="#d9d9d9" stroke-width="2"/><text x="248" y="962" font-family="Liberation Sans" font-size="18" fill="#d9d9d9" text-anchor="middle">A</text><path d="M258,965L265,972" fill="none" stroke="#d8a86e" stroke-width="2.8" /><rect x="278" y="957" width="24" height="8" fill="#76c6f7"/><rect x="278" y="967" width="24" height="7" fill="#cfcfcf"/><text x="285" y="955" font-family="Liberation Sans" font-weight="bold" font-size="16" fill="#76c6f7" text-anchor="middle">A</text><path d="M295,945 A6,6 0 0 1 307,946 M308,952 A6,6 0 0 1 296,951" fill="none" stroke="#4fcf6f" stroke-width="2.2"/><text x="333" y="947" font-family="Liberation Sans" font-weight="bold" font-size="11" fill="#d9d9d9" text-anchor="middle">PDF</text><path d="M325,952V960H331" fill="none" stroke="#ffffff" stroke-width="1.8" /><path d="M330,956.5 L335,960 L330,963.5Z" fill="#ffffff"/><text x="340" y="972" font-family="Liberation Sans" font-style="italic" font-size="18" fill="#d9d9d9" text-anchor="middle">A</text><path d="M343,966 L352,957" fill="none" stroke="#76c6f7" stroke-width="2.5" /><path d="M21,1048V1112 M83,1048V1112" fill="none" stroke="#d9d9d9" stroke-width="2" /><path d="M25,1060H79" fill="none" stroke="#d9d9d9" stroke-width="1.8" /><path d="M23,1060 L30,1056 V1064Z M81,1060 L74,1056 V1064Z" fill="#d9d9d9"/><path d="M52,1078 L54,1090 L50,1090Z M37,1085 L45,1093 L42,1096Z M67,1085 L59,1093 L62,1096Z M28,1102 L40,1101 L40,1104Z M76,1102 L64,1101 L64,1104Z" fill="#f4ca74" stroke="#f4ca74" stroke-width="2"/><path d="M108,1078V1105 M171,1078V1105" fill="none" stroke="#d9d9d9" stroke-width="2" /><path d="M112,1090H167" fill="none" stroke="#d9d9d9" stroke-width="1.8" /><path d="M110,1090 L117,1086 V1094Z M169,1090 L162,1086 V1094Z" fill="#d9d9d9"/><g transform="translate(154,1074) rotate(-40) scale(1.0)"><rect x="2" y="-4" width="14" height="8" fill="#f0f0f0" stroke="#384252" stroke-width="1.2"/><path d="M2,-5 C-6,-6 -14,-2 -18,4 C-10,6 -3,5 2,5Z" fill="#d8a56a"/></g><path d="M190,1043V1073 M222,1043V1073" fill="none" stroke="#d9d9d9" stroke-width="2" /><path d="M195,1052H217" fill="none" stroke="#76c6f7" stroke-width="1.8" /><path d="M193,1052 L198,1049 V1055Z M219,1052 L214,1049 V1055Z" fill="#76c6f7"/><path d="M220,1080 L228,1072 V1080Z" fill="#8e8e8e"/><circle cx="250" cy="1058" r="14" fill="none" stroke="#d9d9d9" stroke-width="2"/><path d="M250,1053V1063 M245,1058H255" fill="none" stroke="#76c6f7" stroke-width="2" /><path d="M264,1080 L272,1072 V1080Z" fill="#8e8e8e"/><path d="M278,1055H287 M294,1043V1070 M288,1072H300 M309,1045V1063" fill="none" stroke="#d9d9d9" stroke-width="1.8" /><path d="M279,1055H290" fill="none" stroke="#76c6f7" stroke-width="2" /><path d="M296,1055H305" fill="none" stroke="#76c6f7" stroke-width="2" /><path d="M308,1055 L302,1051 V1059Z M294,1068 L290,1060 H298Z" fill="#76c6f7"/><path d="M294,1068 L290,1062 H298Z" fill="#d9d9d9"/><path d="M323,1046H353 M323,1069H353" fill="none" stroke="#d9d9d9" stroke-width="1.8" /><path d="M321,1046 L326,1043 V1049Z M355,1046 L350,1043 V1049Z M321,1069 L326,1066 V1072Z M355,1069 L350,1066 V1072Z" fill="#d9d9d9"/><rect x="334" y="1049" width="8" height="17" fill="#f4ca74"/><path d="M191,1088V1116 M205,1088V1116 M220,1088V1113" fill="none" stroke="#d9d9d9" stroke-width="1.8" /><path d="M194,1097H202 M208,1097H217" fill="none" stroke="#76c6f7" stroke-width="1.8" /><path d="M192,1097 L196,1094 V1100Z M204,1097 L200,1094 V1100Z M206,1097 L210,1094 V1100Z M219,1097 L215,1094 V1100Z" fill="#76c6f7"/><path d="M220,1124 L228,1116 V1124Z" fill="#8e8e8e"/><rect x="235" y="1090" width="31" height="23" fill="none" stroke="#d9d9d9" stroke-width="1.8"/><path d="M250,1090V1113" fill="none" stroke="#d9d9d9" stroke-width="1.5" /><circle cx="242" cy="1101" r="5" fill="none" stroke="#ffffff" stroke-width="1.6"/><path d="M235,1101H249 M242,1093V1109" fill="none" stroke="#ffffff" stroke-width="1.5" /><text x="258" y="1110" font-family="Liberation Sans" font-size="14" fill="#ffffff" text-anchor="middle">.1</text><path d="M278,1086V1117 M309,1086V1117" fill="none" stroke="#d9d9d9" stroke-width="1.8" /><path d="M281,1093H306" fill="none" stroke="#d9d9d9" stroke-width="1.6" /><path d="M288,1108 L293,1113 L301,1104" fill="none" stroke="#4fcf6f" stroke-width="3" /><path d="M323,1096 L331,1088 M332,1090 L347,1105 M341,1113 L352,1102" fill="none" stroke="#d9d9d9" stroke-width="1.8" /><text x="346" y="1099" font-family="Liberation Sans" font-weight="bold" font-size="14" fill="#76c6f7" text-anchor="middle">x</text><path d="M352,1124 L360,1116 V1124Z" fill="#8e8e8e"/><circle cx="69" cy="1209" r="14.5" fill="none" stroke="#d9d9d9" stroke-width="2"/><path d="M54.5,1209 H45 L26,1245" fill="none" stroke="#d9d9d9" stroke-width="2" /><path d="M20,1253 L23,1238 L32,1243Z" fill="#d9d9d9"/><circle cx="157" cy="1209" r="14.5" fill="none" stroke="#d9d9d9" stroke-width="2"/><path d="M142.5,1209 H133 L114,1245" fill="none" stroke="#d9d9d9" stroke-width="2" /><path d="M108,1253 L111,1238 L120,1243Z" fill="#d9d9d9"/><g transform="translate(158,1245) rotate(-40) scale(0.95)"><rect x="2" y="-4" width="14" height="8" fill="#f0f0f0" stroke="#384252" stroke-width="1.2"/><path d="M2,-5 C-6,-6 -14,-2 -18,4 C-10,6 -3,5 2,5Z" fill="#d8a56a"/></g><path d="M198,1187V1200 M191.5,1193.5H204.5" fill="none" stroke="#4fcf6f" stroke-width="3" /><circle cx="217" cy="1201" r="4.5" fill="none" stroke="#d9d9d9" stroke-width="1.8"/><path d="M212,1203 H207 L199,1215 M207,1203 L214,1215" fill="none" stroke="#d9d9d9" stroke-width="1.8" /><path d="M196,1219 L197,1211 L202,1214Z M216,1219 L211,1214 L216,1212Z" fill="#d9d9d9"/><circle cx="257" cy="1188" r="4.5" fill="none" stroke="#d9d9d9" stroke-width="1.8"/><circle cx="257" cy="1203" r="4.5" fill="none" stroke="#d9d9d9" stroke-width="1.8"/><path d="M252,1188H245L240,1196 M252,1203H245L240,1211" fill="none" stroke="#d9d9d9" stroke-width="1.8" /><path d="M265,1185V1217" fill="none" stroke="#76c6f7" stroke-width="2" /><circle cx="303" cy="1193" r="5.5" fill="none" stroke="#d9d9d9" stroke-width="1.8"/><path d="M297,1196H291L283,1211" fill="none" stroke="#d9d9d9" stroke-width="1.8" /><path d="M280,1215 L282,1206 L287,1209Z" fill="#d9d9d9"/><path d="M302,1201 L296,1209 H301 L297,1216 L307,1206 H302 L306,1201Z" fill="#f4ca74"/><path d="M191,1235 L199,1243 M199,1235 L191,1243" fill="none" stroke="#e8525a" stroke-width="2.8" /><circle cx="217" cy="1245" r="4.5" fill="none" stroke="#d9d9d9" stroke-width="1.8"/><path d="M212,1247 H207 L199,1259 M207,1247 L214,1259" fill="none" stroke="#d9d9d9" stroke-width="1.8" /><circle cx="259" cy="1237" r="5" fill="none" stroke="#d9d9d9" stroke-width="1.8"/><circle cx="259" cy="1249" r="5" fill="none" stroke="#d9d9d9" stroke-width="1.8"/><path d="M254,1240H248L240,1256" fill="none" stroke="#d9d9d9" stroke-width="1.8" /><path d="M237,1259 L239,1250 L244,1253Z" fill="#d9d9d9"/><rect x="21.5" y="1342" width="60" height="52" fill="none" stroke="#d9d9d9" stroke-width="2"/><path d="M21.5,1358.0H81.5" fill="none" stroke="#d9d9d9" stroke-width="2" /><path d="M21.5,1368.0H81.5" fill="none" stroke="#d9d9d9" stroke-width="2" /><path d="M21.5,1381.0H81.5" fill="none" stroke="#d9d9d9" stroke-width="2" /><path d="M41.5,1358.0V1394" fill="none" stroke="#d9d9d9" stroke-width="2" /><path d="M61.5,1358.0V1394" fill="none" stroke="#d9d9d9" stroke-width="2" /><circle cx="86" cy="1334" r="10.1" fill="#f3f3f3"/><circle cx="86" cy="1334" r="8.5" fill="#f26f3b"/><rect x="108.5" y="1337" width="54" height="52" fill="none" stroke="#d9d9d9" stroke-width="2"/><path d="M108.5,1353.0H162.5" fill="none" stroke="#d9d9d9" stroke-width="2" /><path d="M108.5,1363.0H162.5" fill="none" stroke="#d9d9d9" stroke-width="2" /><path d="M108.5,1376.0H162.5" fill="none" stroke="#d9d9d9" stroke-width="2" /><path d="M126.5,1353.0V1389" fill="none" stroke="#d9d9d9" stroke-width="2" /><path d="M144.5,1353.0V1389" fill="none" stroke="#d9d9d9" stroke-width="2" /><g transform="translate(158,1390) rotate(-40) scale(1.0)"><rect x="2" y="-4" width="14" height="8" fill="#f0f0f0" stroke="#384252" stroke-width="1.2"/><path d="M2,-5 C-6,-6 -14,-2 -18,4 C-10,6 -3,5 2,5Z" fill="#d8a56a"/></g><circle cx="174" cy="1334" r="10.1" fill="#f3f3f3"/><circle cx="174" cy="1334" r="8.5" fill="#f26f3b"/><path d="M194,1332 C188,1332 188,1340 194,1340 C200,1340 200,1348 194,1348" fill="none" stroke="#d8a86e" stroke-width="2.5"/><g transform="translate(198,1335)"><path d="M0,0H16V6H22V20H0Z" fill="#d9d9d9"/><path d="M18,0L22,4H18Z" fill="#f0f0f0"/></g><rect x="205" y="1342" width="18" height="14" fill="#f0f0f0" stroke="#384252" stroke-width="1.3"/><path d="M209,1347H211M213,1347H220M209,1351H211M213,1351H220" stroke="#555" stroke-width="1.4"/><path d="M238,1332 C232,1332 232,1340 238,1340 C244,1340 244,1348 238,1348" fill="none" stroke="#d8a86e" stroke-width="2.5"/><g transform="translate(242,1333)"><path d="M0,0H18V6H24V22H0Z" fill="#d9d9d9"/><path d="M20,0L24,4H20Z" fill="#f0f0f0"/></g><path d="M254,1345V1355 M250,1351 L255,1360 L261,1351Z" stroke="#76c6f7" fill="#76c6f7" stroke-width="3"/><rect x="190" y="1375" width="18" height="16" fill="#f0f0f0"/><path d="M194,1379H196M198,1379H205M194,1383H196M198,1383H205M194,1387H196M198,1387H205" stroke="#3b8fe0" stroke-width="1.5"/><rect x="198" y="1394" width="24" height="8" fill="#cfcfcf"/><rect x="210" y="1387" width="12" height="7" fill="#76c6f7"/><text x="216" y="1388" font-family="Liberation Sans" font-weight="bold" font-size="16" fill="#76c6f7" text-anchor="middle">A</text><path d="M238,1376 C232,1376 232,1384 238,1384 C244,1384 244,1392 238,1392" fill="none" stroke="#d8a86e" stroke-width="2.5"/><g transform="translate(242,1383)"><path d="M0,0H18V6H24V22H0Z" fill="#d9d9d9"/><path d="M20,0L24,4H20Z" fill="#f0f0f0"/></g><path d="M251,1377 A6,6 0 0 1 263,1378 M264,1384 A6,6 0 0 1 252,1383" fill="none" stroke="#4fcf6f" stroke-width="2.4"/><path d="M23,1480V1537" fill="none" stroke="#e0606a" stroke-width="2" /><rect x="20" y="1537" width="6" height="6" fill="#e0606a"/><path d="M28,1541H84" fill="none" stroke="#d9d9d9" stroke-width="2" /><path d="M86,1554 L94,1546 V1554Z" fill="#8e8e8e"/><rect x="102" y="1489" width="11" height="9" fill="#d4d4d4"/><rect x="116" y="1475" width="13" height="11" fill="#76c6f7"/><path d="M115,1475V1498" fill="none" stroke="#e0606a" stroke-width="2" /><path d="M127,1489 L120,1497 H125 L121,1504 L131,1495 H126 L130,1489Z" fill="#f4ca74"/><path d="M151,1476 H147 V1502 H151 M171,1476 H175 V1490" fill="none" stroke="#d9d9d9" stroke-width="1.8" /><path d="M153,1486 L161,1493" fill="none" stroke="#e0606a" stroke-width="2" /><path d="M161,1493 L169,1485" fill="none" stroke="#d9d9d9" stroke-width="1.8" /><path d="M166,1496 A6,6 0 0 1 172,1490 V1502 A6,6 0 0 1 166,1496Z" fill="#f4ca74"/><path d="M172,1490 A6,6 0 0 1 172,1502Z" fill="#f4ca74"/><rect x="169" y="1501" width="6" height="4" fill="#ffffff"/><path d="M197,1482V1545 M258,1482V1545" fill="none" stroke="#d9d9d9" stroke-width="2" /><path d="M202,1493H253" fill="none" stroke="#d9d9d9" stroke-width="1.8" /><path d="M200,1493 L208,1488 V1498Z M255,1493 L247,1488 V1498Z" fill="#d9d9d9"/><path d="M219,1525 V1514 A9,9 0 0 1 237,1514 V1525" fill="none" stroke="#f4ca74" stroke-width="4"/><rect x="214" y="1522" width="28" height="20" rx="2" fill="#f4ca74"/><rect x="226.5" y="1528" width="3" height="8" fill="#384252"/><path d="M264,1556 L272,1548 V1556Z" fill="#8e8e8e"/><path d="M279,1475V1505 M309,1475V1505" fill="none" stroke="#d9d9d9" stroke-width="1.8" /><path d="M282,1481H306" fill="none" stroke="#d9d9d9" stroke-width="1.6" /><path d="M289,1494 A6,6 0 0 1 298,1489" fill="none" stroke="#3b9fe0" stroke-width="2.2"/><path d="M300,1493 A6,6 0 0 1 291,1498" fill="none" stroke="#e0505a" stroke-width="2.2"/><path d="M323,1475V1505 M349,1475V1487" fill="none" stroke="#d9d9d9" stroke-width="1.8" /><path d="M326,1481H346" fill="none" stroke="#d9d9d9" stroke-width="1.6" /><path d="M342,1496 A6,6 0 0 1 348,1490 V1502 A6,6 0 0 1 342,1496Z" fill="#f4ca74"/><path d="M348,1490 A6,6 0 0 1 348,1502Z" fill="#f4ca74"/><rect x="345" y="1501" width="6" height="4" fill="#ffffff"/><path d="M107,1520 H103 V1546 H107 M127,1520 H131 V1534" fill="none" stroke="#d9d9d9" stroke-width="1.8" /><path d="M109,1530 L117,1537" fill="none" stroke="#e0606a" stroke-width="2" /><path d="M117,1537 L125,1529" fill="none" stroke="#d9d9d9" stroke-width="1.8" /><path d="M122,1540 A6,6 0 0 1 128,1534 V1546 A6,6 0 0 1 122,1540Z" fill="#f4ca74"/><path d="M128,1534 A6,6 0 0 1 128,1546Z" fill="#6fd0e0"/><rect x="125" y="1545" width="6" height="4" fill="#ffffff"/><path d="M151,1520 H147 V1546 H151 M171,1520 H175 V1534" fill="none" stroke="#d9d9d9" stroke-width="1.8" /><path d="M153,1530 L161,1537" fill="none" stroke="#e0606a" stroke-width="2" /><path d="M161,1537 L169,1529" fill="none" stroke="#d9d9d9" stroke-width="1.8" /><path d="M166,1540 A6,6 0 0 1 172,1534 V1546 A6,6 0 0 1 166,1540Z" fill="#6fd0e0"/><path d="M172,1534 A6,6 0 0 1 172,1546Z" fill="#6fd0e0"/><rect x="169" y="1545" width="6" height="4" fill="#ffffff"/><path d="M279,1519V1549 M304,1519V1531" fill="none" stroke="#d9d9d9" stroke-width="1.8" /><path d="M282,1525H302" fill="none" stroke="#d9d9d9" stroke-width="1.6" /><path d="M298,1540 A6,6 0 0 1 304,1534 V1546 A6,6 0 0 1 298,1540Z" fill="#f4ca74"/><path d="M304,1534 A6,6 0 0 1 304,1546Z" fill="#6fd0e0"/><rect x="301" y="1545" width="6" height="4" fill="#ffffff"/><path d="M323,1519V1549 M349,1519V1531" fill="none" stroke="#d9d9d9" stroke-width="1.8" /><path d="M326,1525H346" fill="none" stroke="#d9d9d9" stroke-width="1.6" /><path d="M342,1540 A6,6 0 0 1 348,1534 V1546 A6,6 0 0 1 342,1540Z" fill="#6fd0e0"/><path d="M348,1534 A6,6 0 0 1 348,1546Z" fill="#6fd0e0"/><rect x="345" y="1545" width="6" height="4" fill="#ffffff"/><path d="M42,1766V1789 M30.5,1777.5H53.5" fill="none" stroke="#d9d9d9" stroke-width="2" /><path d="M88,1769H114 M88,1775H114 M88,1781H108 M88,1787H114" stroke="#d9d9d9" stroke-width="2.5"/><path d="M108,1781 L112,1777 L116,1781Z" fill="#d9d9d9"/><g transform="translate(2096,123)"></g><path d="M2087,107.4 H2104 L2095,116.4 H2078Z" fill="#d9d9d9" stroke="#384252" stroke-width="1.6" stroke-linejoin="round"/><path d="M2087,101.4 H2104 L2095,110.4 H2078Z" fill="#d9d9d9" stroke="#384252" stroke-width="1.6" stroke-linejoin="round"/><path d="M2087,95.4 H2104 L2095,104.4 H2078Z" fill="#d9d9d9" stroke="#384252" stroke-width="1.6" stroke-linejoin="round"/><circle cx="2104" cy="117" r="7.5" fill="#d9d9d9" stroke="#384252" stroke-width="2"/><rect x="2102.8" y="115" width="2.6" height="7" fill="#384252"/><circle cx="2104.1" cy="112" r="1.5" fill="#384252"/><g transform="translate(2185,97)"><path d="M0,0H23V7H30V22.7H0Z" fill="#d9d9d9"/><path d="M25,0L30,5H25Z" fill="#f0f0f0"/></g><rect x="2183" y="88" width="14" height="21" fill="#2c3340"/><g transform="translate(2185,89)"><path d="M2,18 V5 A4.5,4.5 0 0 1 11,5 V15 A2.2,2.2 0 0 1 6.6,15 V6" fill="none" stroke="#d9d9d9" stroke-width="2.4"/></g><rect x="2291" y="96" width="27" height="25" fill="#d9d9d9"/><rect x="2291" y="96" width="27" height="4" fill="#9a9a9a"/><rect x="2293" y="97" width="3" height="2" fill="#444"/><rect x="2295.0" y="103" width="5" height="4" fill="#555"/><rect x="2295.0" y="109" width="5" height="4" fill="#555"/><rect x="2295.0" y="115" width="5" height="4" fill="#555"/><rect x="2302.5" y="103" width="5" height="4" fill="#555"/><rect x="2302.5" y="109" width="5" height="4" fill="#555"/><rect x="2302.5" y="115" width="5" height="4" fill="#555"/><rect x="2310.0" y="103" width="5" height="4" fill="#555"/><rect x="2310.0" y="109" width="5" height="4" fill="#555"/><rect x="2310.0" y="115" width="5" height="4" fill="#555"/><circle cx="2319" cy="94" r="10.1" fill="#f3f3f3"/><circle cx="2319" cy="94" r="8.5" fill="#f26f3b"/><path d="M2857,102 L2863,108 L2857,114 M2850.5,102 L2856.5,108 L2850.5,114" fill="none" stroke="#8a929c" stroke-width="1.8" /><path d="M2264.9,162.3 H2285.3 L2273.7000000000003,173.9 H2253.3Z" fill="#d9d9d9" stroke="#384252" stroke-width="1.6" stroke-linejoin="round"/><path d="M2264.9,156.3 H2285.3 L2273.7000000000003,167.9 H2253.3Z" fill="#d9d9d9" stroke="#384252" stroke-width="1.6" stroke-linejoin="round"/><path d="M2264.9,150.3 H2285.3 L2273.7000000000003,161.9 H2253.3Z" fill="#76c6f7" stroke="#384252" stroke-width="1.6" stroke-linejoin="round"/><circle cx="2269" cy="149.9" r="7.4" fill="#d9d9d9" stroke="#384252" stroke-width="1.6"/><path d="M2310.7,155.3 H2327.0 L2317.3,165.0 H2301Z" fill="#d9d9d9" stroke="#384252" stroke-width="1.6" stroke-linejoin="round"/><path d="M2310.7,149.1 H2327.0 L2317.3,158.79999999999998 H2301Z" fill="#d9d9d9" stroke="#384252" stroke-width="1.6" stroke-linejoin="round"/><path d="M2310.7,142.9 H2327.0 L2317.3,152.6 H2301Z" fill="#d9d9d9" stroke="#384252" stroke-width="1.6" stroke-linejoin="round"/><g transform="translate(2325,168) rotate(45)"><rect x="-4" y="-8" width="8" height="8" fill="#f4ca74"/><rect x="-5" y="0" width="10" height="6" fill="#f0f0f0"/><rect x="-2" y="5" width="4" height="5" fill="#f0f0f0"/></g><path d="M2364.2000000000003,163.20000000000002 H2380.3 L2370.4,173.10000000000002 H2354.3Z" fill="#d9d9d9" stroke="#384252" stroke-width="1.6" stroke-linejoin="round"/><path d="M2364.2000000000003,157.0 H2380.3 L2370.4,166.9 H2354.3Z" fill="#d9d9d9" stroke="#384252" stroke-width="1.6" stroke-linejoin="round"/><path d="M2364.2000000000003,150.8 H2380.3 L2370.4,160.70000000000002 H2354.3Z" fill="#d9d9d9" stroke="#384252" stroke-width="1.6" stroke-linejoin="round"/><path d="M2350.5,150.8 L2359.8,144.9 V148.5 C2366,148.5 2370,151 2370.4,155.5 C2367,153 2363,153 2359.8,153.5 V157Z" fill="#76c6f7" stroke="#384252" stroke-width="1"/><path d="M2409.8,156.4 H2426.0 L2416.0,166.4 H2399.8Z" fill="#76c6f7" stroke="#384252" stroke-width="1.6" stroke-linejoin="round"/><path d="M2409.8,150.2 H2426.0 L2416.0,160.2 H2399.8Z" fill="#d9d9d9" stroke="#384252" stroke-width="1.6" stroke-linejoin="round"/><path d="M2409.8,144.0 H2426.0 L2416.0,154.0 H2399.8Z" fill="#d9d9d9" stroke="#384252" stroke-width="1.6" stroke-linejoin="round"/><path d="M2426,161.7 L2417.5,170.2" stroke="#ffffff" stroke-width="2.2"/><path d="M2414,174 L2415.5,165 L2422.5,172Z" fill="#ffffff"/><path d="M2457,156.4 H2473.2 L2463.2,166.4 H2447Z" fill="#76c6f7" stroke="#384252" stroke-width="1.6" stroke-linejoin="round"/><path d="M2457,150.2 H2473.2 L2463.2,160.2 H2447Z" fill="#d9d9d9" stroke="#384252" stroke-width="1.6" stroke-linejoin="round"/><path d="M2457,144.0 H2473.2 L2463.2,154.0 H2447Z" fill="#d9d9d9" stroke="#384252" stroke-width="1.6" stroke-linejoin="round"/><path d="M2462,174 L2470.5,165.5" stroke="#ffffff" stroke-width="2.2"/><path d="M2474,161.7 L2472.5,170.7 L2465.5,163.7Z" fill="#ffffff"/><path d="M2504.9,144.9 H2521.4 L2509.4,156.9 H2492.9Z" fill="#d9d9d9"/><path d="M2516,163.9 L2516.0,172.9" stroke="#6ad8e6" stroke-width="2.2"/><path d="M2516,163.9 L2508.2,168.4" stroke="#6ad8e6" stroke-width="2.2"/><path d="M2516,163.9 L2508.2,159.4" stroke="#6ad8e6" stroke-width="2.2"/><path d="M2516,163.9 L2516.0,154.9" stroke="#6ad8e6" stroke-width="2.2"/><path d="M2516,163.9 L2523.8,159.4" stroke="#6ad8e6" stroke-width="2.2"/><path d="M2516,163.9 L2523.8,168.4" stroke="#6ad8e6" stroke-width="2.2"/><circle cx="2516" cy="163.9" r="3.5" fill="none" stroke="#6ad8e6" stroke-width="1.6"/><path d="M2554,144.9 H2570.5 L2558.5,156.9 H2542Z" fill="#d9d9d9"/><circle cx="2566" cy="161" r="6.2" fill="#6ad8e6"/><path d="M2562.7,167 H2569 V169.5 A3.2,3.2 0 0 1 2562.7,169.5Z" fill="#ffffff"/><path d="M2602,144.9 H2618.5 L2606.5,156.9 H2590Z" fill="#d9d9d9"/><path d="M2609,163 V158 A4.5,4.5 0 0 1 2618,158 V163" fill="none" stroke="#6ad8e6" stroke-width="2.4"/><rect x="2607" y="162.3" width="13" height="9.5" fill="#6ad8e6"/><rect x="2612.8" y="165" width="1.6" height="4" fill="#384252"/><path d="M2650,144.9 H2666.5 L2654.5,156.9 H2638Z" fill="#d9d9d9"/><path d="M2659,162.5 V158 A4.5,4.5 0 0 1 2668,158 V161" fill="none" stroke="#f9d27e" stroke-width="2.4"/><rect x="2650.7" y="162.3" width="13.3" height="9.5" fill="#f9d27e"/><rect x="2656.5" y="165" width="1.6" height="4" fill="#384252"/><path d="M2845,134 H2857 V160 H2845 M2845,134 V140 M2845,154 V160" fill="none" stroke="#d9d9d9" stroke-width="2" /><path d="M2837,147 H2850" fill="none" stroke="#d9d9d9" stroke-width="2" /><path d="M2836,147 L2842,142 V152Z" fill="#d9d9d9"/><path d="M2846,380 H2858 V406 H2846 M2846,380 V386 M2846,400 V406" fill="none" stroke="#d9d9d9" stroke-width="2" /><path d="M2838,393 H2851" fill="none" stroke="#d9d9d9" stroke-width="2" /><path d="M2837,393 L2843,388 V398Z" fill="#d9d9d9"/><rect x="2788" y="381" width="20" height="23" fill="none" stroke="#d9d9d9" stroke-width="2"/><path d="M2792,388H2804M2792,393H2804M2792,398H2799" stroke="#d9d9d9" stroke-width="1.8"/><g transform="translate(2808,398) rotate(-45)"><rect x="-8" y="-4" width="14" height="8" fill="#384252" stroke="#d9d9d9" stroke-width="1.8"/><path d="M-8,-4 L-13,0 L-8,4Z" fill="#d9d9d9"/></g><circle cx="2090" cy="223" r="8.2" fill="#dedede"/><path d="M2120,222 V218 A4.5,4.5 0 0 1 2129,218 V222" fill="none" stroke="#6b7584" stroke-width="2.5"/><rect x="2117" y="222" width="14" height="11" fill="#6b7584"/><rect x="2123" y="226" width="2" height="5" fill="#4b586b"/><path d="M2158,223 L2165.4,227.3" stroke="#6b7584" stroke-width="2"/><path d="M2158,223 L2158.0,231.5" stroke="#6b7584" stroke-width="2"/><path d="M2158,223 L2150.6,227.2" stroke="#6b7584" stroke-width="2"/><path d="M2158,223 L2150.6,218.7" stroke="#6b7584" stroke-width="2"/><path d="M2158,223 L2158.0,214.5" stroke="#6b7584" stroke-width="2"/><path d="M2158,223 L2165.4,218.8" stroke="#6b7584" stroke-width="2"/><circle cx="2158" cy="223" r="4" fill="none" stroke="#6b7584" stroke-width="1.5"/><rect x="2183" y="215" width="16" height="16" fill="#1034ff" stroke="#000" stroke-width="2"/><path d="M2846,219 H2860 L2853,227Z" fill="#e6e6e6"/><path d="M2844,276 H2858 L2851,284Z" fill="#e6e6e6"/><path d="M2075,322 L2084,330 L2075,338" fill="none" stroke="#cfcfcf" stroke-width="2.2" /><path d="M2839,441 H2853 L2846,449Z" fill="#8a929c"/><path d="M2832,494.0 H2846 L2839,502.0Z" fill="#e6e6e6"/><path d="M2832,540.0 H2846 L2839,548.0Z" fill="#e6e6e6"/><path d="M2832,586.0 H2846 L2839,594.0Z" fill="#e6e6e6"/><path d="M2832,678.0 H2846 L2839,686.0Z" fill="#e6e6e6"/><path d="M2832,724.0 H2846 L2839,732.0Z" fill="#e6e6e6"/><path d="M2799,719.0 H2818 L2812,725.0 H2793Z" fill="#76c6f7"/><path d="M2799,725.0 H2818 L2812,730.0 H2793Z" fill="#d9d9d9"/><path d="M2799,730.0 H2818 L2812,735.0 H2793Z" fill="#d9d9d9"/><rect x="2461" y="716.0" width="2" height="8" fill="#3d8ff0"/><rect x="2461" y="732.0" width="2" height="8" fill="#3d8ff0"/><rect x="2612" y="729.0" width="1" height="11" fill="#a0a8b0"/><path d="M2832,770.0 H2846 L2839,778.0Z" fill="#e6e6e6"/><path d="M2832,816.0 H2846 L2839,824.0Z" fill="#e6e6e6"/><path d="M2832,862.0 H2846 L2839,870.0Z" fill="#e6e6e6"/><path d="M2832,908.0 H2846 L2839,916.0Z" fill="#e6e6e6"/><path d="M2832,954.0 H2846 L2839,962.0Z" fill="#e6e6e6"/><path d="M2832,1046.0 H2846 L2839,1054.0Z" fill="#e6e6e6"/><path d="M2832,1092.0 H2846 L2839,1100.0Z" fill="#e6e6e6"/><path d="M2819,990.0 V1015.0 M2848,990.0 V1000.0" fill="none" stroke="#d9d9d9" stroke-width="1.8" /><path d="M2823,994.0 H2845" fill="none" stroke="#76c6f7" stroke-width="1.8" /><path d="M2821,994.0 L2826,991.0 V997.0Z M2847,994.0 L2842,991.0 V997.0Z" fill="#76c6f7"/><path d="M2834,1006.0 H2850 M2842,998.0 V1014.0" fill="none" stroke="#ffffff" stroke-width="2" /><rect x="2838" y="1002.0" width="8" height="8" fill="none" stroke="#ffffff" stroke-width="1.8"/><rect x="2158" y="1756" width="40" height="40" fill="#6593c2"/><rect x="2246" y="1756" width="40" height="40" fill="#6593c2"/><rect x="2422" y="1756" width="40" height="40" fill="#6593c2"/><rect x="2466" y="1756" width="40" height="40" fill="#6593c2"/><rect x="2554" y="1756" width="40" height="40" fill="#6593c2"/><rect x="2598" y="1756" width="40" height="40" fill="#6593c2"/><path d="M2170,1761V1791 M2178,1761V1791 M2186,1761V1791 M2163,1768H2193 M2163,1776H2193 M2163,1784H2193" fill="none" stroke="#ffffff" stroke-width="2.3" /><rect x="2210" y="1764" width="4" height="4" fill="#d9d9d9"/><rect x="2210" y="1774" width="4" height="4" fill="#d9d9d9"/><rect x="2210" y="1784" width="4" height="4" fill="#d9d9d9"/><rect x="2220" y="1764" width="4" height="4" fill="#d9d9d9"/><rect x="2220" y="1774" width="4" height="4" fill="#d9d9d9"/><rect x="2220" y="1784" width="4" height="4" fill="#d9d9d9"/><rect x="2230" y="1764" width="4" height="4" fill="#d9d9d9"/><rect x="2230" y="1774" width="4" height="4" fill="#d9d9d9"/><rect x="2230" y="1784" width="4" height="4" fill="#d9d9d9"/><path d="M2251,1760V1792H2282" fill="none" stroke="#ffffff" stroke-width="2.2" /><rect x="2252" y="1781" width="9" height="10" fill="none" stroke="#ffffff" stroke-width="1.8"/><circle cx="2306" cy="1777" r="13" fill="none" stroke="#d9d9d9" stroke-width="2"/><path d="M2306,1777 L2321,1762 M2306,1777 H2326" fill="none" stroke="#d9d9d9" stroke-width="2" /><path d="M2338,1772H2350 M2344,1766V1778" fill="none" stroke="#d9d9d9" stroke-width="2" /><rect x="2350" y="1780" width="20" height="8" fill="#d9d9d9"/><rect x="2352" y="1782" width="2" height="4" fill="#384252"/><rect x="2382" y="1763" width="32" height="2.5" fill="#d9d9d9"/><rect x="2382" y="1763" width="16" height="4" fill="#d9d9d9"/><rect x="2382" y="1771" width="32" height="2.5" fill="#d9d9d9"/><rect x="2382" y="1771" width="16" height="6" fill="#d9d9d9"/><rect x="2382" y="1781" width="32" height="2.5" fill="#d9d9d9"/><rect x="2382" y="1781" width="16" height="9" fill="#d9d9d9"/><rect x="2429" y="1762" width="26" height="27" fill="none" stroke="#ffffff" stroke-width="2"/><rect x="2432" y="1765" width="4" height="4" fill="#ffffff"/><rect x="2432" y="1773" width="4" height="4" fill="#ffffff"/><rect x="2432" y="1781" width="4" height="4" fill="#ffffff"/><rect x="2436" y="1769" width="4" height="4" fill="#ffffff"/><rect x="2436" y="1777" width="4" height="4" fill="#ffffff"/><rect x="2440" y="1765" width="4" height="4" fill="#ffffff"/><rect x="2440" y="1773" width="4" height="4" fill="#ffffff"/><rect x="2440" y="1781" width="4" height="4" fill="#ffffff"/><rect x="2444" y="1769" width="4" height="4" fill="#ffffff"/><rect x="2444" y="1777" width="4" height="4" fill="#ffffff"/><rect x="2448" y="1765" width="4" height="4" fill="#ffffff"/><rect x="2448" y="1773" width="4" height="4" fill="#ffffff"/><rect x="2448" y="1781" width="4" height="4" fill="#ffffff"/><path d="M2474,1761H2471V1791H2474 M2489,1761H2493V1779" fill="none" stroke="#d9d9d9" stroke-width="1.8" /><rect x="2477.5" y="1765" width="9" height="6" fill="#a8c4e0" stroke="#d9d9d9" stroke-width="1.2"/><circle cx="2482" cy="1781" r="4.5" fill="#a8c4e0" stroke="#d9d9d9" stroke-width="1.2"/><path d="M2490,1777 L2502,1787 L2497,1788 L2500,1795 L2497,1796 L2494,1790 L2490,1793Z" fill="#ffffff"/><path d="M2514,1787H2546 M2515,1786 L2537,1764" fill="none" stroke="#d9d9d9" stroke-width="2" /><rect x="2524" y="1771" width="6" height="6" fill="#d9d9d9"/><rect x="2558" y="1760" width="9" height="9" fill="none" stroke="#ffffff" stroke-width="1.8"/><path d="M2570,1764H2589V1791H2562V1772" fill="none" stroke="#ffffff" stroke-width="2" /><path d="M2616,1760 L2630,1792 L2619,1784 L2616,1790 L2613,1784 L2602,1792Z" fill="#ffffff"/><circle cx="2631" cy="1768" r="5.5" fill="#ffffff"/><path d="M2660,1760 L2674,1792 L2663,1784 L2660,1790 L2657,1784 L2646,1792Z" fill="#d9d9d9"/><path d="M2672,1760 L2666,1769 H2671 L2667,1776 L2678,1766 H2673 L2677,1760Z" fill="#f4ca74"/><path d="M2706,1760 L2720,1792 L2709,1784 L2706,1790 L2703,1784 L2692,1792Z" fill="#d9d9d9"/><path d="M2761,1772 H2771 L2766,1778Z" fill="#d9d9d9"/><rect x="2790" y="1760" width="13" height="13" fill="none" stroke="#d9d9d9" stroke-width="1.8"/><circle cx="2815" cy="1772" r="6.5" fill="none" stroke="#d9d9d9" stroke-width="1.8"/><path d="M2798,1791 L2803,1782 L2808,1791Z" fill="none" stroke="#d9d9d9" stroke-width="1.8"/><rect x="2846.5" y="1761" width="7" height="30" fill="#d9d9d9" transform="rotate(0 2850 1776)"/><rect x="2846.5" y="1761" width="7" height="30" fill="#d9d9d9" transform="rotate(45 2850 1776)"/><rect x="2846.5" y="1761" width="7" height="30" fill="#d9d9d9" transform="rotate(90 2850 1776)"/><rect x="2846.5" y="1761" width="7" height="30" fill="#d9d9d9" transform="rotate(135 2850 1776)"/><circle cx="2850" cy="1776" r="11" fill="#d9d9d9"/><circle cx="2850" cy="1776" r="5" fill="#384252"/></svg>
</body></html>
